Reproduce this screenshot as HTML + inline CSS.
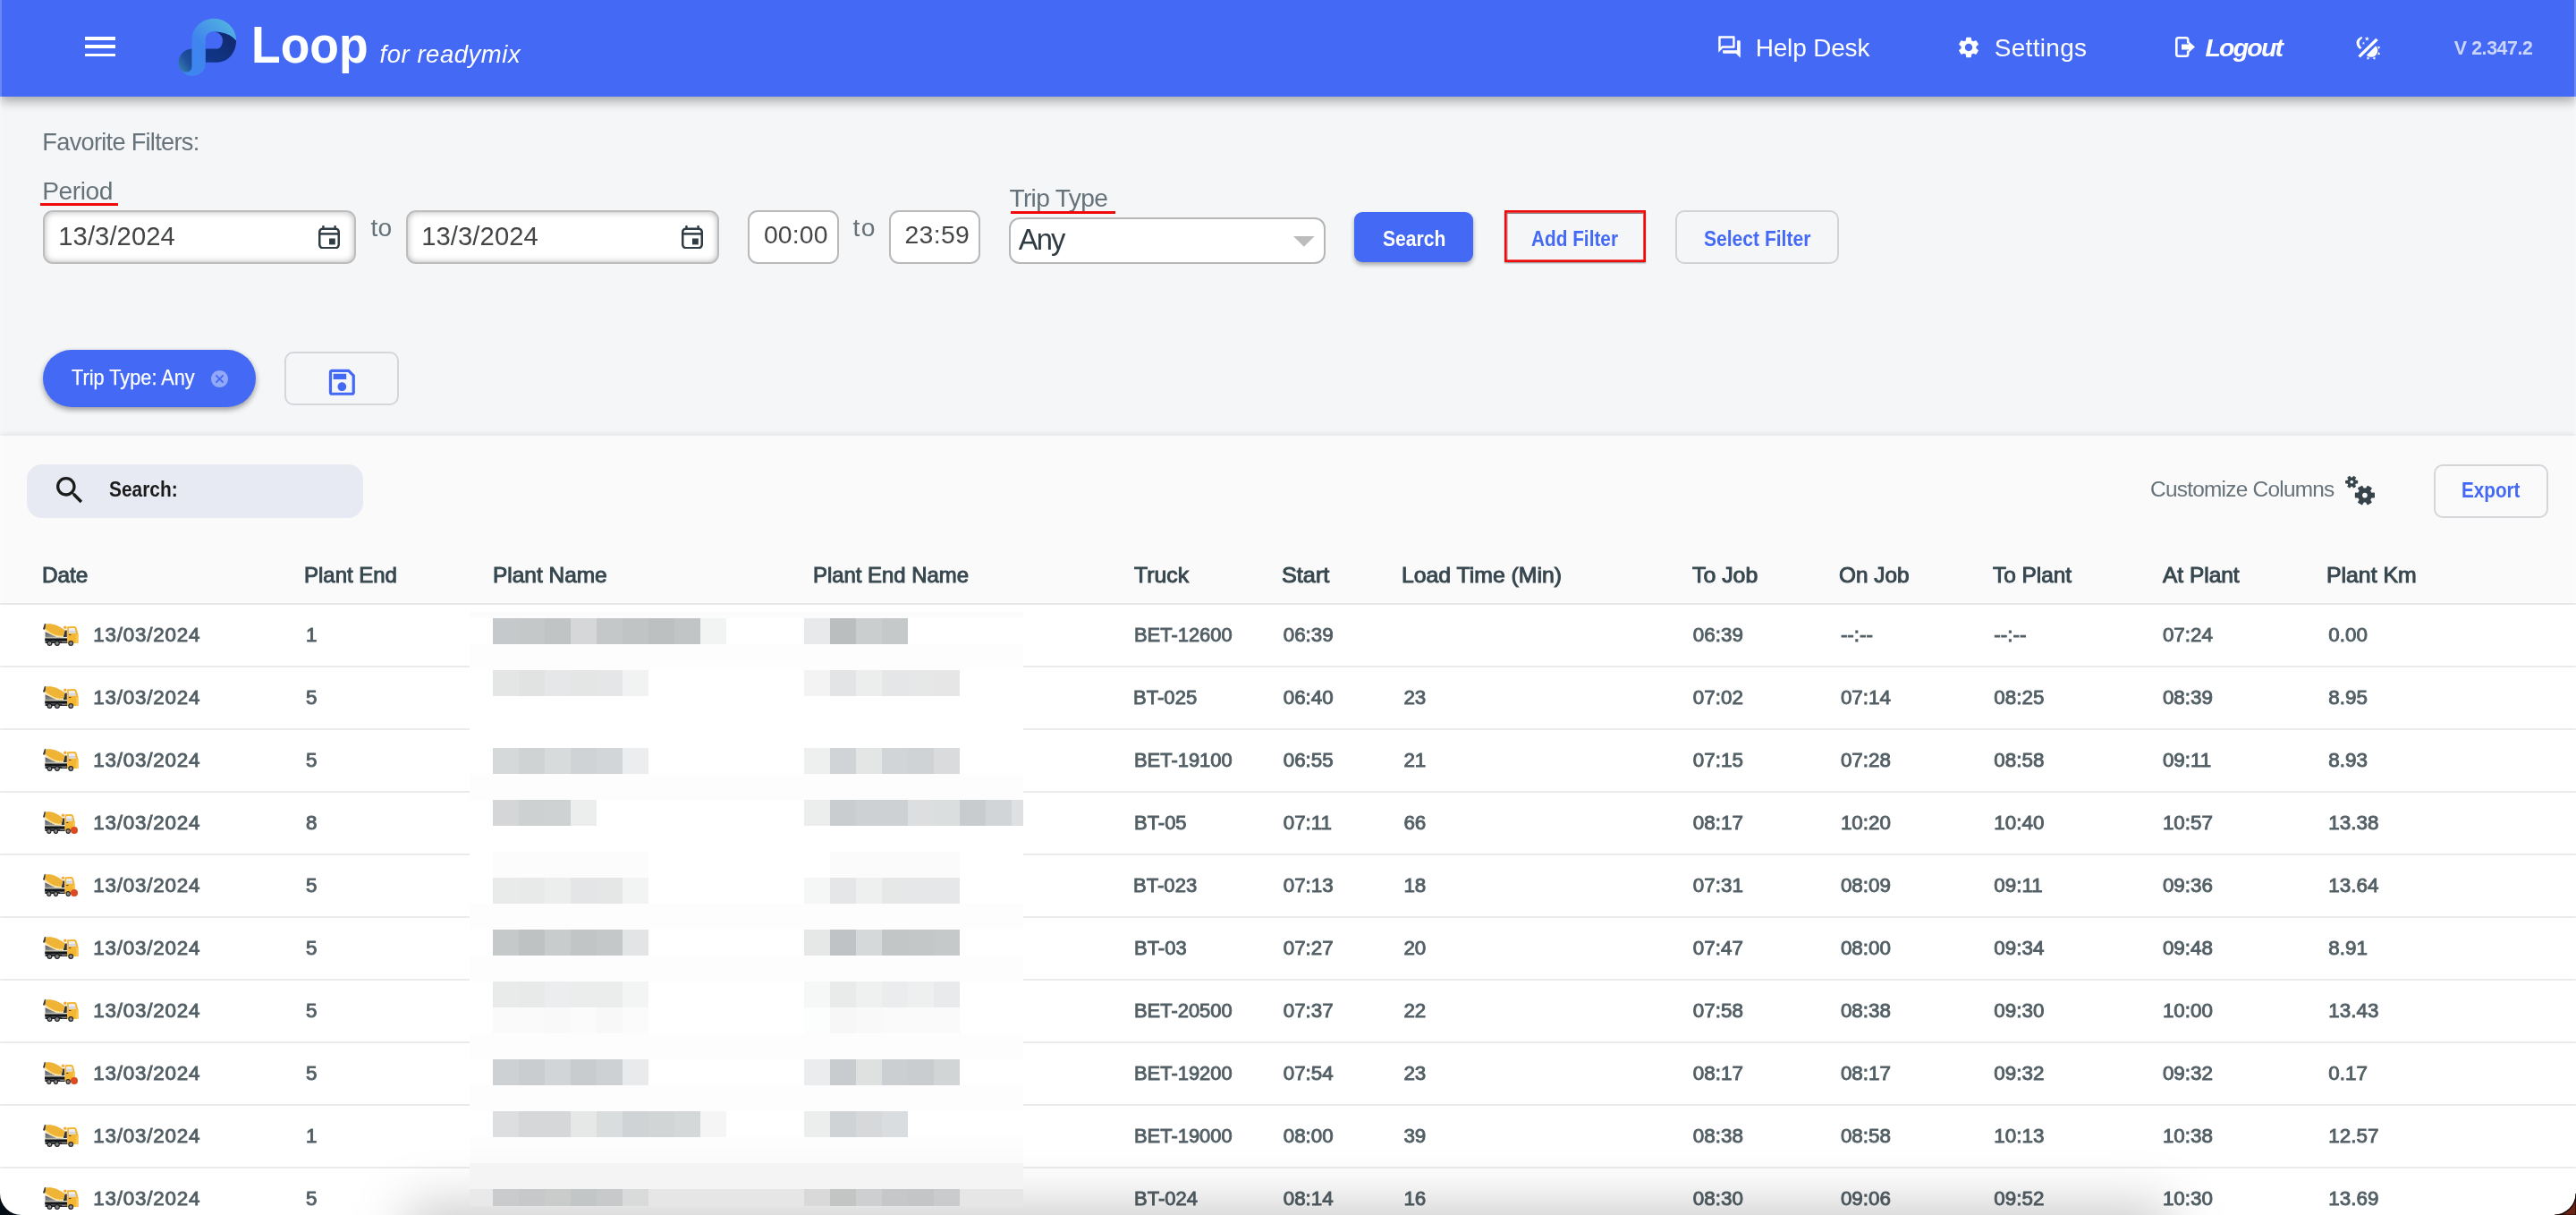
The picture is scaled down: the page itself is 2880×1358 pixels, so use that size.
<!DOCTYPE html>
<html lang="en"><head><meta charset="utf-8"><title>Loop for readymix</title>
<style>
html,body{margin:0;padding:0;}
body{width:2880px;height:1358px;position:relative;overflow:hidden;background:#fafafa;font-family:"Liberation Sans",sans-serif;}
.t{position:absolute;white-space:nowrap;line-height:1;margin:0;padding:0;}
.b{position:absolute;box-sizing:border-box;display:block;}
#root{position:absolute;left:0;top:0;width:2880px;height:1358px;overflow:hidden;will-change:transform;}
</style></head><body><div id="root">
<div class="b" style="left:0px;top:108px;width:2880px;height:379px;background:#f5f6f8;"></div>
<div class="b" style="left:0px;top:487px;width:2880px;height:189px;background:#fafafa;box-shadow:0 -1px 7px rgba(0,0,0,.095);"></div>
<div class="b" style="left:0px;top:676px;width:2880px;height:682px;background:#fff;"></div>
<div class="b" style="left:0px;top:0px;width:2880px;height:108px;background:#4469f5;box-shadow:0 5px 12px rgba(0,0,0,.33);z-index:5;"></div>
<div class="b" style="left:0;top:0;width:2880px;height:108px;z-index:6;">
<div class="b" style="left:95px;top:41px;width:34px;height:3.9px;background:#fff;"></div>
<div class="b" style="left:95px;top:50.2px;width:34px;height:3.9px;background:#fff;"></div>
<div class="b" style="left:95px;top:59.6px;width:34px;height:3.9px;background:#fff;"></div>
<svg class="b" style="left:180px;top:10px;" width="120" height="90" viewBox="0 0 120 90" ><defs>
<linearGradient id="lg1" x1="0" y1="1" x2="1" y2="0"><stop offset="0" stop-color="#3f86f0"/><stop offset=".45" stop-color="#3f84ee"/><stop offset="1" stop-color="#55bbdc"/></linearGradient>
<linearGradient id="lg2" x1="0" y1="1" x2="1" y2="0"><stop offset="0" stop-color="#10388c"/><stop offset="1" stop-color="#12276a"/></linearGradient>
<linearGradient id="lg3" x1="1" y1="0" x2="0" y2="1"><stop offset="0" stop-color="#123c8e"/><stop offset=".5" stop-color="#1f4f9c"/><stop offset="1" stop-color="#3c8fb8"/></linearGradient>
</defs>
<g transform="scale(0.074074)">
<path d="M470 600 C340 610 265 700 265 805 C265 910 340 1000 455 1010 L560 900 Z" fill="url(#lg3)"/>
<path d="M780 340 C900 335 1040 370 1135 475 C1135 660 1010 805 850 805 L670 805 L670 600 L850 600 C900 600 930 540 930 470 C930 400 870 345 780 340 Z" fill="url(#lg2)"/>
<path d="M465 870 L465 470 C465 280 620 145 800 145 C990 145 1135 300 1135 475 C1040 370 900 335 780 340 C710 345 670 400 670 470 L670 830 C670 940 580 1012 455 1012 C380 1005 330 960 300 920 C360 975 465 960 465 870 Z" fill="url(#lg1)"/>
</g></svg>
<div class="t" style="left:280.97px;top:21.81px;font-size:57.4px;color:#fff;font-weight:700;transform:scaleX(0.9318);transform-origin:0 0;">Loop</div>
<div class="t" style="left:424.59px;top:47.02px;font-size:27.5px;color:#fff;font-style:italic;letter-spacing:0.525px;">for readymix</div>
<svg class="b" style="left:1920px;top:39px;" width="27" height="27" viewBox="1 1 22 22" ><path fill="#fff" d="M15 4v7H5.17L4 12.17V4h11m1-2H3c-.55 0-1 .45-1 1v14l4-4h10c.55 0 1-.45 1-1V3c0-.55-.45-1-1-1zm5 4h-2v9H6v2c0 .55.45 1 1 1h11l4 4V7c0-.55-.45-1-1-1z"/></svg>
<div class="t" style="left:1962.70px;top:39.70px;font-size:28px;color:#fff;letter-spacing:-0.178px;">Help Desk</div>
<svg class="b" style="left:2186.5px;top:38.5px;" width="28" height="28" viewBox="0 0 24 24" ><path fill="#fff" d="M19.14 12.94c.04-.3.06-.61.06-.94 0-.32-.02-.64-.07-.94l2.03-1.58c.18-.14.23-.41.12-.61l-1.92-3.32c-.12-.22-.37-.29-.59-.22l-2.39.96c-.5-.38-1.03-.7-1.62-.94l-.36-2.54c-.04-.24-.24-.41-.48-.41h-3.84c-.24 0-.43.17-.47.41l-.36 2.54c-.59.24-1.13.57-1.62.94l-2.39-.96c-.22-.08-.47 0-.59.22L2.74 8.87c-.12.21-.08.47.12.61l2.03 1.58c-.05.3-.09.63-.09.94s.02.64.07.94l-2.03 1.58c-.18.14-.23.41-.12.61l1.92 3.32c.12.22.37.29.59.22l2.39-.96c.5.38 1.03.7 1.62.94l.36 2.54c.05.24.24.41.48.41h3.84c.24 0 .44-.17.47-.41l.36-2.54c.59-.24 1.13-.56 1.62-.94l2.39.96c.22.08.47 0 .59-.22l1.92-3.32c.12-.22.07-.47-.12-.61l-2.01-1.58zM12 15.6c-1.98 0-3.6-1.62-3.6-3.6s1.62-3.6 3.6-3.6 3.6 1.62 3.6 3.6-1.62 3.6-3.6 3.6z"/></svg>
<div class="t" style="left:2229.74px;top:39.70px;font-size:28px;color:#fff;letter-spacing:0.301px;">Settings</div>
<svg class="b" style="left:2431.5px;top:41px;" width="23" height="23" viewBox="0 0 23 23" ><path fill="none" stroke="#fff" stroke-width="2.6" stroke-linejoin="round" stroke-linecap="butt" d="M14.2 7.5 V3.5 Q14.2 1.3 12 1.3 H3.5 Q1.3 1.3 1.3 3.5 V19.5 Q1.3 21.7 3.5 21.7 H12 Q14.2 21.7 14.2 19.5 V15.5"/><path fill="#fff" d="M7 8.6 H15 V5.2 L22 11.5 L15 17.8 V14.4 H7 Z"/></svg>
<div class="t" style="left:2465.52px;top:39.07px;font-size:28.5px;color:#fff;font-weight:700;font-style:italic;letter-spacing:-1.809px;">Logout</div>
<svg class="b" style="left:2634px;top:40px;" width="27" height="27" viewBox="0 0 27 27" ><g fill="#fff"><path d="M22.2 2.7 L24.8 5.0 L4.7 24.5 L2.4 22.2 Z"/>
<path d="M6.6 0.9 C2.6 2.0 0.5 5 0.55 7.8 C0.6 10.8 2.3 13.6 4.7 15.0 L6.5 13.3 C4.7 12 3.6 10 3.7 7.8 C3.8 5.6 4.9 3.9 7.3 2.7 Z"/>
<path d="M12.30 0.70 L12.97 2.48 L14.87 2.57 L13.38 3.75 L13.89 5.58 L12.30 4.53 L10.71 5.58 L11.22 3.75 L9.73 2.57 L11.63 2.48Z"/><path d="M8.40 6.60 L8.82 7.72 L10.02 7.77 L9.08 8.52 L9.40 9.68 L8.40 9.01 L7.40 9.68 L7.72 8.52 L6.78 7.77 L7.98 7.72Z"/>
<path d="M22.2 11.2 A7.4 7.4 0 0 1 11.7 21.7 Z"/>
<path d="M27.33 12.25 L25.38 14.88 L24.10 11.73Z M27.33 20.65 L24.10 21.17 L25.38 18.02Z M21.15 26.83 L18.52 24.88 L21.67 23.60Z M12.75 26.83 L12.23 23.60 L15.38 24.88Z"/></g></svg>
<div class="t" style="left:2743.87px;top:43.77px;font-size:21.3px;color:#fff;font-weight:700;letter-spacing:-0.403px;opacity:0.72;">V 2.347.2</div>
</div>
<div class="t" style="left:47.37px;top:144.98px;font-size:27.2px;color:#66737a;letter-spacing:-0.719px;">Favorite Filters:</div>
<div class="t" style="left:47.29px;top:198.73px;font-size:28.2px;color:#66737a;letter-spacing:-0.482px;">Period</div>
<div class="b" style="left:45.2px;top:226.6px;width:86.7px;height:3px;background:#f00a0c;"></div>
<div class="b" style="left:48.3px;top:235.2px;width:349.5px;height:59.5px;background:#fff;border:2px solid #bcbcbc;border-radius:11px;box-shadow:inset 0 0 7px rgba(0,0,0,.30);"></div>
<div class="t" style="left:65.28px;top:249.58px;font-size:29.2px;color:#434547;letter-spacing:0.082px;">13/3/2024</div>
<svg class="b" style="left:356px;top:251.6px;" width="24" height="26.4" viewBox="0 0 24 26.4" ><g fill="none" stroke="#2f3c43" stroke-width="2.5"><rect x="1.25" y="3.65" width="21.5" height="21.5" rx="3.6"/><path d="M1.25 9.4H22.75"/></g><g fill="#2f3c43"><rect x="4.2" y="0" width="2.5" height="3.2" rx="1"/><rect x="17.4" y="0" width="2.5" height="3.2" rx="1"/><rect x="12" y="14.5" width="6.8" height="6.9"/></g></svg>
<div class="t" style="left:414.38px;top:239.93px;font-size:28.2px;color:#66737a;letter-spacing:0.360px;">to</div>
<div class="b" style="left:454.3px;top:235.2px;width:349.7px;height:59.5px;background:#fff;border:2px solid #bcbcbc;border-radius:11px;box-shadow:inset 0 0 7px rgba(0,0,0,.30);"></div>
<div class="t" style="left:471.18px;top:249.58px;font-size:29.2px;color:#434547;letter-spacing:0.094px;">13/3/2024</div>
<svg class="b" style="left:762px;top:251.8px;" width="24" height="26.4" viewBox="0 0 24 26.4" ><g fill="none" stroke="#2f3c43" stroke-width="2.5"><rect x="1.25" y="3.65" width="21.5" height="21.5" rx="3.6"/><path d="M1.25 9.4H22.75"/></g><g fill="#2f3c43"><rect x="4.2" y="0" width="2.5" height="3.2" rx="1"/><rect x="17.4" y="0" width="2.5" height="3.2" rx="1"/><rect x="12" y="14.5" width="6.8" height="6.9"/></g></svg>
<div class="b" style="left:836px;top:235px;width:101.5px;height:59.6px;background:#fff;border:2px solid #b9b9b9;border-radius:11px;"></div>
<div class="t" style="left:853.89px;top:247.96px;font-size:28.4px;color:#434547;letter-spacing:0.133px;">00:00</div>
<div class="t" style="left:953.58px;top:240.03px;font-size:28.2px;color:#66737a;letter-spacing:1.360px;">to</div>
<div class="b" style="left:994.4px;top:235px;width:101.4px;height:59.6px;background:#fff;border:2px solid #b9b9b9;border-radius:11px;"></div>
<div class="t" style="left:1011.48px;top:247.96px;font-size:28.4px;color:#434547;letter-spacing:0.325px;">23:59</div>
<div class="t" style="left:1128.38px;top:207.13px;font-size:28.2px;color:#66737a;letter-spacing:-0.666px;">Trip Type</div>
<div class="b" style="left:1129.8px;top:236.2px;width:117px;height:2.8px;background:#f00a0c;"></div>
<div class="b" style="left:1128.2px;top:243.2px;width:353.4px;height:51.4px;background:#fff;border:2px solid #b6b6b6;border-radius:12px;"></div>
<div class="t" style="left:1138.73px;top:252.22px;font-size:32.7px;color:#2f3c43;letter-spacing:-1.856px;">Any</div>
<svg class="b" style="left:1446px;top:264px;" width="23.7" height="11.8" viewBox="0 0 23.7 11.8" ><path fill="#bcbcbc" d="M0 0H23.7L11.85 11.8Z"/></svg>
<div class="b" style="left:1514px;top:237.2px;width:132.8px;height:55.8px;background:#4469f5;border-radius:9px;box-shadow:0 3px 5px rgba(0,0,0,.32);"></div>
<div class="t" style="left:1545.71px;top:254.73px;font-size:24.3px;color:#fff;font-weight:700;transform:scaleX(0.8684);transform-origin:0 0;">Search</div>
<div class="b" style="left:1682px;top:235.2px;width:158px;height:58px;box-shadow:0 1.5px 1.5px rgba(0,0,0,.35), inset 0 4px 1.5px -1.5px rgba(0,0,0,.3);"></div>
<svg class="b" style="left:1682px;top:235.2px;" width="158" height="58" viewBox="0 0 158 58" ><rect x="1.35" y="1.35" width="155.3" height="55.3" fill="none" stroke="#ee0a0a" stroke-width="2.7"/></svg>
<div class="b" style="left:1684.7px;top:237.9px;width:152.6px;height:1.3px;background:rgba(0,0,0,.45);"></div>
<div class="b" style="left:1684.7px;top:239.2px;width:1px;height:51px;background:rgba(0,0,0,.22);"></div>
<div class="t" style="left:1711.50px;top:254.73px;font-size:24.3px;color:#4469f5;font-weight:700;transform:scaleX(0.8554);transform-origin:0 0;">Add Filter</div>
<div class="b" style="left:1873.4px;top:235.4px;width:182.3px;height:59.2px;border:2px solid #d2d3d6;border-radius:10px;"></div>
<div class="t" style="left:1904.61px;top:254.73px;font-size:24.3px;color:#4469f5;font-weight:700;transform:scaleX(0.8666);transform-origin:0 0;">Select Filter</div>
<div class="b" style="left:48px;top:391.2px;width:238.2px;height:63.6px;background:#4469f5;border-radius:32px;box-shadow:0 3px 6px rgba(0,0,0,.38);"></div>
<div class="t" style="left:80.12px;top:410.05px;font-size:23.8px;color:#fff;transform:scaleX(0.9133);transform-origin:0 0;-webkit-text-stroke:0.25px #fff;">Trip Type: Any</div>
<svg class="b" style="left:235.6px;top:414.2px;" width="19" height="19" viewBox="2 2 20 20" ><path fill="#fff" fill-opacity=".42" d="M12 2C6.47 2 2 6.47 2 12s4.47 10 10 10 10-4.47 10-10S17.53 2 12 2zm5 13.59L15.59 17 12 13.41 8.41 17 7 15.59 10.59 12 7 8.41 8.41 7 12 10.59 15.59 7 17 8.41 13.41 12 17 15.59z"/></svg>
<div class="b" style="left:318.3px;top:393.4px;width:127.3px;height:59.2px;border:2px solid #d4d6da;border-radius:10px;"></div>
<svg class="b" style="left:362.7px;top:408.2px;" width="38.7" height="38.7" viewBox="0 0 24 24" ><path fill="#4469f5" d="M17 3H5c-1.11 0-2 .9-2 2v14c0 1.1.89 2 2 2h14c1.1 0 2-.9 2-2V7l-4-4zm2 16H5V5h11.17L19 7.83V19zm-7-7c-1.66 0-3 1.34-3 3s1.34 3 3 3 3-1.34 3-3-1.34-3-3-3zM6 6h9v4H6z"/></svg>
<div class="b" style="left:30px;top:518.9px;width:376px;height:60.1px;background:#e7eaf3;border-radius:17px;"></div>
<svg class="b" style="left:57.9px;top:528.1px;" width="40" height="40" viewBox="0 0 24 24" ><path fill="#1b1b1b" d="M15.5 14h-.79l-.28-.27C15.41 12.59 16 11.11 16 9.5 16 5.91 13.09 3 9.5 3S3 5.91 3 9.5 5.91 16 9.5 16c1.61 0 3.09-.59 4.23-1.57l.27.28v.79l5 4.99L20.49 19l-4.99-5zm-6 0C7.01 14 5 11.99 5 9.5S7.01 5 9.5 5 14 7.01 14 9.5 11.99 14 9.5 14z"/></svg>
<div class="t" style="left:122.02px;top:536.13px;font-size:23px;color:#1b1b1b;font-weight:700;transform:scaleX(0.9078);transform-origin:0 0;">Search:</div>
<div class="t" style="left:2404.08px;top:534.65px;font-size:24.4px;color:#66737a;letter-spacing:-0.751px;">Customize Columns</div>
<div class="b" style="left:2721.3px;top:519px;width:128px;height:59.5px;border:2px solid #d4d6da;border-radius:10px;"></div>
<div class="t" style="left:2752.33px;top:537.23px;font-size:23px;color:#4469f5;font-weight:700;transform:scaleX(0.8994);transform-origin:0 0;">Export</div>
<svg class="b" style="left:2620px;top:529px;" width="38" height="38" viewBox="0 0 38 38" ><path fill="#36434a" fill-rule="evenodd" stroke="#36434a" stroke-width="1" stroke-linejoin="round" d="M13.70 8.34 L15.75 8.31 L15.75 11.09 L13.70 11.06 L12.63 12.92 L13.68 14.68 L11.27 16.07 L10.27 14.28 L8.13 14.28 L7.13 16.07 L4.72 14.68 L5.77 12.92 L4.70 11.06 L2.65 11.09 L2.65 8.31 L4.70 8.34 L5.77 6.48 L4.72 4.72 L7.13 3.33 L8.13 5.12 L10.27 5.12 L11.27 3.33 L13.68 4.72 L12.63 6.48Z M11.50 9.70 A2.3 2.3 0 1 0 6.90 9.70 A2.3 2.3 0 1 0 11.50 9.70Z"/><path fill="#36434a" fill-rule="evenodd" stroke="#36434a" stroke-width="1.6" stroke-linejoin="round" d="M30.98 22.46 L34.17 22.42 L34.17 26.78 L30.98 26.74 L29.29 29.67 L30.93 32.40 L27.14 34.59 L25.59 31.80 L22.21 31.80 L20.66 34.59 L16.87 32.40 L18.51 29.67 L16.82 26.74 L13.63 26.78 L13.63 22.42 L16.82 22.46 L18.51 19.53 L16.87 16.80 L20.66 14.61 L22.21 17.40 L25.59 17.40 L27.14 14.61 L30.93 16.80 L29.29 19.53Z M27.60 24.60 A3.7 3.7 0 1 0 20.20 24.60 A3.7 3.7 0 1 0 27.60 24.60Z"/></svg>
<div class="t" style="left:47.01px;top:630.98px;font-size:24px;color:#37474f;transform:scaleX(1.0133);transform-origin:0 0;-webkit-text-stroke:0.95px #37474f;">Date</div>
<div class="t" style="left:340.04px;top:630.98px;font-size:24px;color:#37474f;transform:scaleX(0.9984);transform-origin:0 0;-webkit-text-stroke:0.95px #37474f;">Plant End</div>
<div class="t" style="left:550.70px;top:630.98px;font-size:24px;color:#37474f;transform:scaleX(1.0184);transform-origin:0 0;-webkit-text-stroke:0.95px #37474f;">Plant Name</div>
<div class="t" style="left:908.64px;top:630.98px;font-size:24px;color:#37474f;transform:scaleX(0.9957);transform-origin:0 0;-webkit-text-stroke:0.95px #37474f;">Plant End Name</div>
<div class="t" style="left:1267.95px;top:630.98px;font-size:24px;color:#37474f;transform:scaleX(1.0336);transform-origin:0 0;-webkit-text-stroke:0.95px #37474f;">Truck</div>
<div class="t" style="left:1432.86px;top:630.98px;font-size:24px;color:#37474f;transform:scaleX(1.0518);transform-origin:0 0;-webkit-text-stroke:0.95px #37474f;">Start</div>
<div class="t" style="left:1566.97px;top:630.98px;font-size:24px;color:#37474f;transform:scaleX(1.0321);transform-origin:0 0;-webkit-text-stroke:0.95px #37474f;">Load Time (Min)</div>
<div class="t" style="left:1892.05px;top:630.98px;font-size:24px;color:#37474f;transform:scaleX(1.0362);transform-origin:0 0;-webkit-text-stroke:0.95px #37474f;">To Job</div>
<div class="t" style="left:2056.46px;top:630.98px;font-size:24px;color:#37474f;transform:scaleX(1.0138);transform-origin:0 0;-webkit-text-stroke:0.95px #37474f;">On Job</div>
<div class="t" style="left:2228.46px;top:630.98px;font-size:24px;color:#37474f;transform:scaleX(1.0161);transform-origin:0 0;-webkit-text-stroke:0.95px #37474f;">To Plant</div>
<div class="t" style="left:2417.55px;top:630.98px;font-size:24px;color:#37474f;transform:scaleX(1.0187);transform-origin:0 0;-webkit-text-stroke:0.95px #37474f;">At Plant</div>
<div class="t" style="left:2600.97px;top:630.98px;font-size:24px;color:#37474f;transform:scaleX(1.0337);transform-origin:0 0;-webkit-text-stroke:0.95px #37474f;">Plant Km</div>
<div class="b" style="left:0px;top:674px;width:2880px;height:2px;background:#e8e8e8;"></div>
<svg class="b" style="left:48.3px;top:697px;overflow:visible;" width="40" height="25" viewBox="0 0 40 25" ><defs><linearGradient id="tg1" x1="0" y1="0" x2="1" y2="1"><stop offset="0" stop-color="#55585e"/><stop offset="1" stop-color="#b3b5b9"/></linearGradient>
<linearGradient id="tg2" x1="0" y1="0" x2="0" y2="1"><stop offset="0" stop-color="#f2f3fa"/><stop offset=".55" stop-color="#e9ebf5"/><stop offset=".6" stop-color="#cfd4e4"/><stop offset="1" stop-color="#dfe2ee"/></linearGradient></defs>
<g>
<path d="M2.57 9.3 L14.75 14.7 L26.3 15.7 L2.57 15.7 Z" fill="url(#tg1)"/>
<path d="M2.2 15.6 H26.8 V16.5 H2.2 Z" fill="#d8d0a2"/>
<path d="M2.2 16.4 H27.3 V19.4 H2.2 Z" fill="#12151a"/>
<path d="M2.6 19.3 H28 V22 H2.6 Z" fill="#2b2d31"/>
<path d="M21.2 20 H26.6 V21 H21.2 Z" fill="#80838a"/>
<path d="M24.4 7.6 L26.8 7.6 L26.8 14.9 L22.8 14.9 Z" fill="#33363e"/>
<path d="M-0.07 6.17 L1.9 0.08 L4.05 0.74 L2.24 6.83 Z" fill="#35373b"/>
<path d="M2.9 0.9 C5.5 0.2 8 0.3 10.1 0.57 C13 1.1 15.6 2 18 3.2 C20.2 4.3 22.2 5.4 23.6 6.4 C24.4 7 24.7 7.5 24.6 8.1 L22.5 14.4 C19.6 14.7 17 14.6 14.75 14.1 C12.3 13.5 10.1 12.6 8.2 11.4 C6 10.2 4 8.8 2.57 7.5 Z" fill="#efb336"/>
<path d="M2.95 6.1 C4.8 7.8 6.8 9.2 8.9 10.3 C11 11.5 13.2 12.5 15.5 13.1 C17.7 13.6 20 13.8 22.8 13.6 L22.5 14.6 C19.6 14.8 17.3 14.7 15.1 14.2 C12.7 13.6 10.5 12.7 8.4 11.5 C6.3 10.3 4.3 8.9 2.6 7.3 Z" fill="#fbe59a"/>
<circle cx="24.8" cy="4.2" r="1.7" fill="#f5a838"/>
<path d="M27.6 3.2 L35.5 2.9 Q37.3 3.1 37.9 5.5 L39.5 11.4 V22 H27.1 V4 Q27.1 3.3 27.6 3.2 Z" fill="#f5b733"/>
<path d="M37.2 12 L39.5 11.4 V22 H36.6 Z" fill="#f8c54e"/>
<path d="M28.9 5.2 L34.8 5.0 Q35.5 5.0 35.7 5.7 L37 10.8 H28.9 Z" fill="url(#tg2)"/>
<rect x="28.9" y="11.9" width="2.6" height="1.2" rx=".5" fill="#4a4030"/>
<circle cx="7.5" cy="22" r="2.95" fill="#1f2023"/><circle cx="7.5" cy="22" r="1.75" fill="#a3a3a3"/><circle cx="7.5" cy="22" r=".7" fill="#5a5a5a"/>
<circle cx="15.9" cy="22" r="2.95" fill="#1f2023"/><circle cx="15.9" cy="22" r="1.75" fill="#a3a3a3"/><circle cx="15.9" cy="22" r=".7" fill="#5a5a5a"/>
<circle cx="31.2" cy="22" r="2.95" fill="#1f2023"/><circle cx="31.2" cy="22" r="1.75" fill="#a3a3a3"/><circle cx="31.2" cy="22" r=".7" fill="#5a5a5a"/>
</g></svg>
<div class="t" style="left:104.30px;top:698.64px;font-size:22.4px;color:#525f65;letter-spacing:0.793px;-webkit-text-stroke:0.9px #525f65;">13/03/2024</div>
<div class="t" style="left:342.00px;top:698.64px;font-size:22.4px;color:#525f65;-webkit-text-stroke:0.9px #525f65;">1</div>
<div class="t" style="left:1267.50px;top:698.64px;font-size:22.4px;color:#525f65;transform:scaleX(0.9792);transform-origin:0 0;-webkit-text-stroke:0.9px #525f65;">BET-12600</div>
<div class="t" style="left:1434.70px;top:698.64px;font-size:22.4px;color:#525f65;-webkit-text-stroke:0.9px #525f65;">06:39</div>
<div class="t" style="left:1892.80px;top:698.64px;font-size:22.4px;color:#525f65;-webkit-text-stroke:0.9px #525f65;">06:39</div>
<div class="t" style="left:2057.90px;top:698.64px;font-size:22.4px;color:#525f65;-webkit-text-stroke:0.9px #525f65;">--:--</div>
<div class="t" style="left:2229.30px;top:698.64px;font-size:22.4px;color:#525f65;-webkit-text-stroke:0.9px #525f65;">--:--</div>
<div class="t" style="left:2417.90px;top:698.64px;font-size:22.4px;color:#525f65;-webkit-text-stroke:0.9px #525f65;">07:24</div>
<div class="t" style="left:2603.30px;top:698.64px;font-size:22.4px;color:#525f65;-webkit-text-stroke:0.9px #525f65;">0.00</div>
<div class="b" style="left:0px;top:744px;width:2880px;height:2px;background:#ebebeb;"></div>
<svg class="b" style="left:48.3px;top:767px;overflow:visible;" width="40" height="25" viewBox="0 0 40 25" ><defs><linearGradient id="tg1" x1="0" y1="0" x2="1" y2="1"><stop offset="0" stop-color="#55585e"/><stop offset="1" stop-color="#b3b5b9"/></linearGradient>
<linearGradient id="tg2" x1="0" y1="0" x2="0" y2="1"><stop offset="0" stop-color="#f2f3fa"/><stop offset=".55" stop-color="#e9ebf5"/><stop offset=".6" stop-color="#cfd4e4"/><stop offset="1" stop-color="#dfe2ee"/></linearGradient></defs>
<g>
<path d="M2.57 9.3 L14.75 14.7 L26.3 15.7 L2.57 15.7 Z" fill="url(#tg1)"/>
<path d="M2.2 15.6 H26.8 V16.5 H2.2 Z" fill="#d8d0a2"/>
<path d="M2.2 16.4 H27.3 V19.4 H2.2 Z" fill="#12151a"/>
<path d="M2.6 19.3 H28 V22 H2.6 Z" fill="#2b2d31"/>
<path d="M21.2 20 H26.6 V21 H21.2 Z" fill="#80838a"/>
<path d="M24.4 7.6 L26.8 7.6 L26.8 14.9 L22.8 14.9 Z" fill="#33363e"/>
<path d="M-0.07 6.17 L1.9 0.08 L4.05 0.74 L2.24 6.83 Z" fill="#35373b"/>
<path d="M2.9 0.9 C5.5 0.2 8 0.3 10.1 0.57 C13 1.1 15.6 2 18 3.2 C20.2 4.3 22.2 5.4 23.6 6.4 C24.4 7 24.7 7.5 24.6 8.1 L22.5 14.4 C19.6 14.7 17 14.6 14.75 14.1 C12.3 13.5 10.1 12.6 8.2 11.4 C6 10.2 4 8.8 2.57 7.5 Z" fill="#efb336"/>
<path d="M2.95 6.1 C4.8 7.8 6.8 9.2 8.9 10.3 C11 11.5 13.2 12.5 15.5 13.1 C17.7 13.6 20 13.8 22.8 13.6 L22.5 14.6 C19.6 14.8 17.3 14.7 15.1 14.2 C12.7 13.6 10.5 12.7 8.4 11.5 C6.3 10.3 4.3 8.9 2.6 7.3 Z" fill="#fbe59a"/>
<circle cx="24.8" cy="4.2" r="1.7" fill="#f5a838"/>
<path d="M27.6 3.2 L35.5 2.9 Q37.3 3.1 37.9 5.5 L39.5 11.4 V22 H27.1 V4 Q27.1 3.3 27.6 3.2 Z" fill="#f5b733"/>
<path d="M37.2 12 L39.5 11.4 V22 H36.6 Z" fill="#f8c54e"/>
<path d="M28.9 5.2 L34.8 5.0 Q35.5 5.0 35.7 5.7 L37 10.8 H28.9 Z" fill="url(#tg2)"/>
<rect x="28.9" y="11.9" width="2.6" height="1.2" rx=".5" fill="#4a4030"/>
<circle cx="7.5" cy="22" r="2.95" fill="#1f2023"/><circle cx="7.5" cy="22" r="1.75" fill="#a3a3a3"/><circle cx="7.5" cy="22" r=".7" fill="#5a5a5a"/>
<circle cx="15.9" cy="22" r="2.95" fill="#1f2023"/><circle cx="15.9" cy="22" r="1.75" fill="#a3a3a3"/><circle cx="15.9" cy="22" r=".7" fill="#5a5a5a"/>
<circle cx="31.2" cy="22" r="2.95" fill="#1f2023"/><circle cx="31.2" cy="22" r="1.75" fill="#a3a3a3"/><circle cx="31.2" cy="22" r=".7" fill="#5a5a5a"/>
</g></svg>
<div class="t" style="left:104.30px;top:768.64px;font-size:22.4px;color:#525f65;letter-spacing:0.793px;-webkit-text-stroke:0.9px #525f65;">13/03/2024</div>
<div class="t" style="left:342.00px;top:768.64px;font-size:22.4px;color:#525f65;-webkit-text-stroke:0.9px #525f65;">5</div>
<div class="t" style="left:1267.49px;top:768.64px;font-size:22.4px;color:#525f65;transform:scaleX(0.9861);transform-origin:0 0;-webkit-text-stroke:0.9px #525f65;">BT-025</div>
<div class="t" style="left:1434.70px;top:768.64px;font-size:22.4px;color:#525f65;-webkit-text-stroke:0.9px #525f65;">06:40</div>
<div class="t" style="left:1569.40px;top:768.64px;font-size:22.4px;color:#525f65;-webkit-text-stroke:0.9px #525f65;">23</div>
<div class="t" style="left:1892.80px;top:768.64px;font-size:22.4px;color:#525f65;-webkit-text-stroke:0.9px #525f65;">07:02</div>
<div class="t" style="left:2057.90px;top:768.64px;font-size:22.4px;color:#525f65;-webkit-text-stroke:0.9px #525f65;">07:14</div>
<div class="t" style="left:2229.30px;top:768.64px;font-size:22.4px;color:#525f65;-webkit-text-stroke:0.9px #525f65;">08:25</div>
<div class="t" style="left:2417.90px;top:768.64px;font-size:22.4px;color:#525f65;-webkit-text-stroke:0.9px #525f65;">08:39</div>
<div class="t" style="left:2603.30px;top:768.64px;font-size:22.4px;color:#525f65;-webkit-text-stroke:0.9px #525f65;">8.95</div>
<div class="b" style="left:0px;top:814px;width:2880px;height:2px;background:#ebebeb;"></div>
<svg class="b" style="left:48.3px;top:837px;overflow:visible;" width="40" height="25" viewBox="0 0 40 25" ><defs><linearGradient id="tg1" x1="0" y1="0" x2="1" y2="1"><stop offset="0" stop-color="#55585e"/><stop offset="1" stop-color="#b3b5b9"/></linearGradient>
<linearGradient id="tg2" x1="0" y1="0" x2="0" y2="1"><stop offset="0" stop-color="#f2f3fa"/><stop offset=".55" stop-color="#e9ebf5"/><stop offset=".6" stop-color="#cfd4e4"/><stop offset="1" stop-color="#dfe2ee"/></linearGradient></defs>
<g>
<path d="M2.57 9.3 L14.75 14.7 L26.3 15.7 L2.57 15.7 Z" fill="url(#tg1)"/>
<path d="M2.2 15.6 H26.8 V16.5 H2.2 Z" fill="#d8d0a2"/>
<path d="M2.2 16.4 H27.3 V19.4 H2.2 Z" fill="#12151a"/>
<path d="M2.6 19.3 H28 V22 H2.6 Z" fill="#2b2d31"/>
<path d="M21.2 20 H26.6 V21 H21.2 Z" fill="#80838a"/>
<path d="M24.4 7.6 L26.8 7.6 L26.8 14.9 L22.8 14.9 Z" fill="#33363e"/>
<path d="M-0.07 6.17 L1.9 0.08 L4.05 0.74 L2.24 6.83 Z" fill="#35373b"/>
<path d="M2.9 0.9 C5.5 0.2 8 0.3 10.1 0.57 C13 1.1 15.6 2 18 3.2 C20.2 4.3 22.2 5.4 23.6 6.4 C24.4 7 24.7 7.5 24.6 8.1 L22.5 14.4 C19.6 14.7 17 14.6 14.75 14.1 C12.3 13.5 10.1 12.6 8.2 11.4 C6 10.2 4 8.8 2.57 7.5 Z" fill="#efb336"/>
<path d="M2.95 6.1 C4.8 7.8 6.8 9.2 8.9 10.3 C11 11.5 13.2 12.5 15.5 13.1 C17.7 13.6 20 13.8 22.8 13.6 L22.5 14.6 C19.6 14.8 17.3 14.7 15.1 14.2 C12.7 13.6 10.5 12.7 8.4 11.5 C6.3 10.3 4.3 8.9 2.6 7.3 Z" fill="#fbe59a"/>
<circle cx="24.8" cy="4.2" r="1.7" fill="#f5a838"/>
<path d="M27.6 3.2 L35.5 2.9 Q37.3 3.1 37.9 5.5 L39.5 11.4 V22 H27.1 V4 Q27.1 3.3 27.6 3.2 Z" fill="#f5b733"/>
<path d="M37.2 12 L39.5 11.4 V22 H36.6 Z" fill="#f8c54e"/>
<path d="M28.9 5.2 L34.8 5.0 Q35.5 5.0 35.7 5.7 L37 10.8 H28.9 Z" fill="url(#tg2)"/>
<rect x="28.9" y="11.9" width="2.6" height="1.2" rx=".5" fill="#4a4030"/>
<circle cx="7.5" cy="22" r="2.95" fill="#1f2023"/><circle cx="7.5" cy="22" r="1.75" fill="#a3a3a3"/><circle cx="7.5" cy="22" r=".7" fill="#5a5a5a"/>
<circle cx="15.9" cy="22" r="2.95" fill="#1f2023"/><circle cx="15.9" cy="22" r="1.75" fill="#a3a3a3"/><circle cx="15.9" cy="22" r=".7" fill="#5a5a5a"/>
<circle cx="31.2" cy="22" r="2.95" fill="#1f2023"/><circle cx="31.2" cy="22" r="1.75" fill="#a3a3a3"/><circle cx="31.2" cy="22" r=".7" fill="#5a5a5a"/>
</g></svg>
<div class="t" style="left:104.30px;top:838.64px;font-size:22.4px;color:#525f65;letter-spacing:0.793px;-webkit-text-stroke:0.9px #525f65;">13/03/2024</div>
<div class="t" style="left:342.00px;top:838.64px;font-size:22.4px;color:#525f65;-webkit-text-stroke:0.9px #525f65;">5</div>
<div class="t" style="left:1267.50px;top:838.64px;font-size:22.4px;color:#525f65;transform:scaleX(0.9792);transform-origin:0 0;-webkit-text-stroke:0.9px #525f65;">BET-19100</div>
<div class="t" style="left:1434.70px;top:838.64px;font-size:22.4px;color:#525f65;-webkit-text-stroke:0.9px #525f65;">06:55</div>
<div class="t" style="left:1569.40px;top:838.64px;font-size:22.4px;color:#525f65;-webkit-text-stroke:0.9px #525f65;">21</div>
<div class="t" style="left:1892.80px;top:838.64px;font-size:22.4px;color:#525f65;-webkit-text-stroke:0.9px #525f65;">07:15</div>
<div class="t" style="left:2057.90px;top:838.64px;font-size:22.4px;color:#525f65;-webkit-text-stroke:0.9px #525f65;">07:28</div>
<div class="t" style="left:2229.30px;top:838.64px;font-size:22.4px;color:#525f65;-webkit-text-stroke:0.9px #525f65;">08:58</div>
<div class="t" style="left:2417.90px;top:838.64px;font-size:22.4px;color:#525f65;-webkit-text-stroke:0.9px #525f65;">09:11</div>
<div class="t" style="left:2603.30px;top:838.64px;font-size:22.4px;color:#525f65;-webkit-text-stroke:0.9px #525f65;">8.93</div>
<div class="b" style="left:0px;top:884px;width:2880px;height:2px;background:#ebebeb;"></div>
<svg class="b" style="left:48.3px;top:907px;overflow:visible;" width="36.2" height="25" viewBox="0 0 40 25" preserveAspectRatio="none"><defs><linearGradient id="tg1" x1="0" y1="0" x2="1" y2="1"><stop offset="0" stop-color="#55585e"/><stop offset="1" stop-color="#b3b5b9"/></linearGradient>
<linearGradient id="tg2" x1="0" y1="0" x2="0" y2="1"><stop offset="0" stop-color="#f2f3fa"/><stop offset=".55" stop-color="#e9ebf5"/><stop offset=".6" stop-color="#cfd4e4"/><stop offset="1" stop-color="#dfe2ee"/></linearGradient></defs>
<g>
<path d="M2.57 9.3 L14.75 14.7 L26.3 15.7 L2.57 15.7 Z" fill="url(#tg1)"/>
<path d="M2.2 15.6 H26.8 V16.5 H2.2 Z" fill="#d8d0a2"/>
<path d="M2.2 16.4 H27.3 V19.4 H2.2 Z" fill="#12151a"/>
<path d="M2.6 19.3 H28 V22 H2.6 Z" fill="#2b2d31"/>
<path d="M21.2 20 H26.6 V21 H21.2 Z" fill="#80838a"/>
<path d="M24.4 7.6 L26.8 7.6 L26.8 14.9 L22.8 14.9 Z" fill="#33363e"/>
<path d="M-0.07 6.17 L1.9 0.08 L4.05 0.74 L2.24 6.83 Z" fill="#35373b"/>
<path d="M2.9 0.9 C5.5 0.2 8 0.3 10.1 0.57 C13 1.1 15.6 2 18 3.2 C20.2 4.3 22.2 5.4 23.6 6.4 C24.4 7 24.7 7.5 24.6 8.1 L22.5 14.4 C19.6 14.7 17 14.6 14.75 14.1 C12.3 13.5 10.1 12.6 8.2 11.4 C6 10.2 4 8.8 2.57 7.5 Z" fill="#efb336"/>
<path d="M2.95 6.1 C4.8 7.8 6.8 9.2 8.9 10.3 C11 11.5 13.2 12.5 15.5 13.1 C17.7 13.6 20 13.8 22.8 13.6 L22.5 14.6 C19.6 14.8 17.3 14.7 15.1 14.2 C12.7 13.6 10.5 12.7 8.4 11.5 C6.3 10.3 4.3 8.9 2.6 7.3 Z" fill="#fbe59a"/>
<circle cx="24.8" cy="4.2" r="1.7" fill="#f5a838"/>
<path d="M27.6 3.2 L35.5 2.9 Q37.3 3.1 37.9 5.5 L39.5 11.4 V22 H27.1 V4 Q27.1 3.3 27.6 3.2 Z" fill="#f5b733"/>
<path d="M37.2 12 L39.5 11.4 V22 H36.6 Z" fill="#f8c54e"/>
<path d="M28.9 5.2 L34.8 5.0 Q35.5 5.0 35.7 5.7 L37 10.8 H28.9 Z" fill="url(#tg2)"/>
<rect x="28.9" y="11.9" width="2.6" height="1.2" rx=".5" fill="#4a4030"/>
<circle cx="7.5" cy="22" r="2.95" fill="#1f2023"/><circle cx="7.5" cy="22" r="1.75" fill="#a3a3a3"/><circle cx="7.5" cy="22" r=".7" fill="#5a5a5a"/>
<circle cx="15.9" cy="22" r="2.95" fill="#1f2023"/><circle cx="15.9" cy="22" r="1.75" fill="#a3a3a3"/><circle cx="15.9" cy="22" r=".7" fill="#5a5a5a"/>
<circle cx="31.2" cy="22" r="2.95" fill="#1f2023"/><circle cx="31.2" cy="22" r="1.75" fill="#a3a3a3"/><circle cx="31.2" cy="22" r=".7" fill="#5a5a5a"/>
</g></svg>
<div class="b" style="left:79.3px;top:923.5px;width:8px;height:8px;background:#dc4a22;border-radius:50%;"></div>
<div class="t" style="left:104.30px;top:908.64px;font-size:22.4px;color:#525f65;letter-spacing:0.793px;-webkit-text-stroke:0.9px #525f65;">13/03/2024</div>
<div class="t" style="left:342.00px;top:908.64px;font-size:22.4px;color:#525f65;-webkit-text-stroke:0.9px #525f65;">8</div>
<div class="t" style="left:1267.50px;top:908.64px;font-size:22.4px;color:#525f65;transform:scaleX(0.9806);transform-origin:0 0;-webkit-text-stroke:0.9px #525f65;">BT-05</div>
<div class="t" style="left:1434.70px;top:908.64px;font-size:22.4px;color:#525f65;-webkit-text-stroke:0.9px #525f65;">07:11</div>
<div class="t" style="left:1569.40px;top:908.64px;font-size:22.4px;color:#525f65;-webkit-text-stroke:0.9px #525f65;">66</div>
<div class="t" style="left:1892.80px;top:908.64px;font-size:22.4px;color:#525f65;-webkit-text-stroke:0.9px #525f65;">08:17</div>
<div class="t" style="left:2057.90px;top:908.64px;font-size:22.4px;color:#525f65;-webkit-text-stroke:0.9px #525f65;">10:20</div>
<div class="t" style="left:2229.30px;top:908.64px;font-size:22.4px;color:#525f65;-webkit-text-stroke:0.9px #525f65;">10:40</div>
<div class="t" style="left:2417.90px;top:908.64px;font-size:22.4px;color:#525f65;-webkit-text-stroke:0.9px #525f65;">10:57</div>
<div class="t" style="left:2603.30px;top:908.64px;font-size:22.4px;color:#525f65;-webkit-text-stroke:0.9px #525f65;">13.38</div>
<div class="b" style="left:0px;top:954px;width:2880px;height:2px;background:#ebebeb;"></div>
<svg class="b" style="left:48.3px;top:977px;overflow:visible;" width="36.2" height="25" viewBox="0 0 40 25" preserveAspectRatio="none"><defs><linearGradient id="tg1" x1="0" y1="0" x2="1" y2="1"><stop offset="0" stop-color="#55585e"/><stop offset="1" stop-color="#b3b5b9"/></linearGradient>
<linearGradient id="tg2" x1="0" y1="0" x2="0" y2="1"><stop offset="0" stop-color="#f2f3fa"/><stop offset=".55" stop-color="#e9ebf5"/><stop offset=".6" stop-color="#cfd4e4"/><stop offset="1" stop-color="#dfe2ee"/></linearGradient></defs>
<g>
<path d="M2.57 9.3 L14.75 14.7 L26.3 15.7 L2.57 15.7 Z" fill="url(#tg1)"/>
<path d="M2.2 15.6 H26.8 V16.5 H2.2 Z" fill="#d8d0a2"/>
<path d="M2.2 16.4 H27.3 V19.4 H2.2 Z" fill="#12151a"/>
<path d="M2.6 19.3 H28 V22 H2.6 Z" fill="#2b2d31"/>
<path d="M21.2 20 H26.6 V21 H21.2 Z" fill="#80838a"/>
<path d="M24.4 7.6 L26.8 7.6 L26.8 14.9 L22.8 14.9 Z" fill="#33363e"/>
<path d="M-0.07 6.17 L1.9 0.08 L4.05 0.74 L2.24 6.83 Z" fill="#35373b"/>
<path d="M2.9 0.9 C5.5 0.2 8 0.3 10.1 0.57 C13 1.1 15.6 2 18 3.2 C20.2 4.3 22.2 5.4 23.6 6.4 C24.4 7 24.7 7.5 24.6 8.1 L22.5 14.4 C19.6 14.7 17 14.6 14.75 14.1 C12.3 13.5 10.1 12.6 8.2 11.4 C6 10.2 4 8.8 2.57 7.5 Z" fill="#efb336"/>
<path d="M2.95 6.1 C4.8 7.8 6.8 9.2 8.9 10.3 C11 11.5 13.2 12.5 15.5 13.1 C17.7 13.6 20 13.8 22.8 13.6 L22.5 14.6 C19.6 14.8 17.3 14.7 15.1 14.2 C12.7 13.6 10.5 12.7 8.4 11.5 C6.3 10.3 4.3 8.9 2.6 7.3 Z" fill="#fbe59a"/>
<circle cx="24.8" cy="4.2" r="1.7" fill="#f5a838"/>
<path d="M27.6 3.2 L35.5 2.9 Q37.3 3.1 37.9 5.5 L39.5 11.4 V22 H27.1 V4 Q27.1 3.3 27.6 3.2 Z" fill="#f5b733"/>
<path d="M37.2 12 L39.5 11.4 V22 H36.6 Z" fill="#f8c54e"/>
<path d="M28.9 5.2 L34.8 5.0 Q35.5 5.0 35.7 5.7 L37 10.8 H28.9 Z" fill="url(#tg2)"/>
<rect x="28.9" y="11.9" width="2.6" height="1.2" rx=".5" fill="#4a4030"/>
<circle cx="7.5" cy="22" r="2.95" fill="#1f2023"/><circle cx="7.5" cy="22" r="1.75" fill="#a3a3a3"/><circle cx="7.5" cy="22" r=".7" fill="#5a5a5a"/>
<circle cx="15.9" cy="22" r="2.95" fill="#1f2023"/><circle cx="15.9" cy="22" r="1.75" fill="#a3a3a3"/><circle cx="15.9" cy="22" r=".7" fill="#5a5a5a"/>
<circle cx="31.2" cy="22" r="2.95" fill="#1f2023"/><circle cx="31.2" cy="22" r="1.75" fill="#a3a3a3"/><circle cx="31.2" cy="22" r=".7" fill="#5a5a5a"/>
</g></svg>
<div class="b" style="left:79.3px;top:993.5px;width:8px;height:8px;background:#dc4a22;border-radius:50%;"></div>
<div class="t" style="left:104.30px;top:978.64px;font-size:22.4px;color:#525f65;letter-spacing:0.793px;-webkit-text-stroke:0.9px #525f65;">13/03/2024</div>
<div class="t" style="left:342.00px;top:978.64px;font-size:22.4px;color:#525f65;-webkit-text-stroke:0.9px #525f65;">5</div>
<div class="t" style="left:1267.49px;top:978.64px;font-size:22.4px;color:#525f65;transform:scaleX(0.9868);transform-origin:0 0;-webkit-text-stroke:0.9px #525f65;">BT-023</div>
<div class="t" style="left:1434.70px;top:978.64px;font-size:22.4px;color:#525f65;-webkit-text-stroke:0.9px #525f65;">07:13</div>
<div class="t" style="left:1569.40px;top:978.64px;font-size:22.4px;color:#525f65;-webkit-text-stroke:0.9px #525f65;">18</div>
<div class="t" style="left:1892.80px;top:978.64px;font-size:22.4px;color:#525f65;-webkit-text-stroke:0.9px #525f65;">07:31</div>
<div class="t" style="left:2057.90px;top:978.64px;font-size:22.4px;color:#525f65;-webkit-text-stroke:0.9px #525f65;">08:09</div>
<div class="t" style="left:2229.30px;top:978.64px;font-size:22.4px;color:#525f65;-webkit-text-stroke:0.9px #525f65;">09:11</div>
<div class="t" style="left:2417.90px;top:978.64px;font-size:22.4px;color:#525f65;-webkit-text-stroke:0.9px #525f65;">09:36</div>
<div class="t" style="left:2603.30px;top:978.64px;font-size:22.4px;color:#525f65;-webkit-text-stroke:0.9px #525f65;">13.64</div>
<div class="b" style="left:0px;top:1024px;width:2880px;height:2px;background:#ebebeb;"></div>
<svg class="b" style="left:48.3px;top:1047px;overflow:visible;" width="40" height="25" viewBox="0 0 40 25" ><defs><linearGradient id="tg1" x1="0" y1="0" x2="1" y2="1"><stop offset="0" stop-color="#55585e"/><stop offset="1" stop-color="#b3b5b9"/></linearGradient>
<linearGradient id="tg2" x1="0" y1="0" x2="0" y2="1"><stop offset="0" stop-color="#f2f3fa"/><stop offset=".55" stop-color="#e9ebf5"/><stop offset=".6" stop-color="#cfd4e4"/><stop offset="1" stop-color="#dfe2ee"/></linearGradient></defs>
<g>
<path d="M2.57 9.3 L14.75 14.7 L26.3 15.7 L2.57 15.7 Z" fill="url(#tg1)"/>
<path d="M2.2 15.6 H26.8 V16.5 H2.2 Z" fill="#d8d0a2"/>
<path d="M2.2 16.4 H27.3 V19.4 H2.2 Z" fill="#12151a"/>
<path d="M2.6 19.3 H28 V22 H2.6 Z" fill="#2b2d31"/>
<path d="M21.2 20 H26.6 V21 H21.2 Z" fill="#80838a"/>
<path d="M24.4 7.6 L26.8 7.6 L26.8 14.9 L22.8 14.9 Z" fill="#33363e"/>
<path d="M-0.07 6.17 L1.9 0.08 L4.05 0.74 L2.24 6.83 Z" fill="#35373b"/>
<path d="M2.9 0.9 C5.5 0.2 8 0.3 10.1 0.57 C13 1.1 15.6 2 18 3.2 C20.2 4.3 22.2 5.4 23.6 6.4 C24.4 7 24.7 7.5 24.6 8.1 L22.5 14.4 C19.6 14.7 17 14.6 14.75 14.1 C12.3 13.5 10.1 12.6 8.2 11.4 C6 10.2 4 8.8 2.57 7.5 Z" fill="#efb336"/>
<path d="M2.95 6.1 C4.8 7.8 6.8 9.2 8.9 10.3 C11 11.5 13.2 12.5 15.5 13.1 C17.7 13.6 20 13.8 22.8 13.6 L22.5 14.6 C19.6 14.8 17.3 14.7 15.1 14.2 C12.7 13.6 10.5 12.7 8.4 11.5 C6.3 10.3 4.3 8.9 2.6 7.3 Z" fill="#fbe59a"/>
<circle cx="24.8" cy="4.2" r="1.7" fill="#f5a838"/>
<path d="M27.6 3.2 L35.5 2.9 Q37.3 3.1 37.9 5.5 L39.5 11.4 V22 H27.1 V4 Q27.1 3.3 27.6 3.2 Z" fill="#f5b733"/>
<path d="M37.2 12 L39.5 11.4 V22 H36.6 Z" fill="#f8c54e"/>
<path d="M28.9 5.2 L34.8 5.0 Q35.5 5.0 35.7 5.7 L37 10.8 H28.9 Z" fill="url(#tg2)"/>
<rect x="28.9" y="11.9" width="2.6" height="1.2" rx=".5" fill="#4a4030"/>
<circle cx="7.5" cy="22" r="2.95" fill="#1f2023"/><circle cx="7.5" cy="22" r="1.75" fill="#a3a3a3"/><circle cx="7.5" cy="22" r=".7" fill="#5a5a5a"/>
<circle cx="15.9" cy="22" r="2.95" fill="#1f2023"/><circle cx="15.9" cy="22" r="1.75" fill="#a3a3a3"/><circle cx="15.9" cy="22" r=".7" fill="#5a5a5a"/>
<circle cx="31.2" cy="22" r="2.95" fill="#1f2023"/><circle cx="31.2" cy="22" r="1.75" fill="#a3a3a3"/><circle cx="31.2" cy="22" r=".7" fill="#5a5a5a"/>
</g></svg>
<div class="t" style="left:104.30px;top:1048.64px;font-size:22.4px;color:#525f65;letter-spacing:0.793px;-webkit-text-stroke:0.9px #525f65;">13/03/2024</div>
<div class="t" style="left:342.00px;top:1048.64px;font-size:22.4px;color:#525f65;-webkit-text-stroke:0.9px #525f65;">5</div>
<div class="t" style="left:1267.50px;top:1048.64px;font-size:22.4px;color:#525f65;transform:scaleX(0.9813);transform-origin:0 0;-webkit-text-stroke:0.9px #525f65;">BT-03</div>
<div class="t" style="left:1434.70px;top:1048.64px;font-size:22.4px;color:#525f65;-webkit-text-stroke:0.9px #525f65;">07:27</div>
<div class="t" style="left:1569.40px;top:1048.64px;font-size:22.4px;color:#525f65;-webkit-text-stroke:0.9px #525f65;">20</div>
<div class="t" style="left:1892.80px;top:1048.64px;font-size:22.4px;color:#525f65;-webkit-text-stroke:0.9px #525f65;">07:47</div>
<div class="t" style="left:2057.90px;top:1048.64px;font-size:22.4px;color:#525f65;-webkit-text-stroke:0.9px #525f65;">08:00</div>
<div class="t" style="left:2229.30px;top:1048.64px;font-size:22.4px;color:#525f65;-webkit-text-stroke:0.9px #525f65;">09:34</div>
<div class="t" style="left:2417.90px;top:1048.64px;font-size:22.4px;color:#525f65;-webkit-text-stroke:0.9px #525f65;">09:48</div>
<div class="t" style="left:2603.30px;top:1048.64px;font-size:22.4px;color:#525f65;-webkit-text-stroke:0.9px #525f65;">8.91</div>
<div class="b" style="left:0px;top:1094px;width:2880px;height:2px;background:#ebebeb;"></div>
<svg class="b" style="left:48.3px;top:1117px;overflow:visible;" width="40" height="25" viewBox="0 0 40 25" ><defs><linearGradient id="tg1" x1="0" y1="0" x2="1" y2="1"><stop offset="0" stop-color="#55585e"/><stop offset="1" stop-color="#b3b5b9"/></linearGradient>
<linearGradient id="tg2" x1="0" y1="0" x2="0" y2="1"><stop offset="0" stop-color="#f2f3fa"/><stop offset=".55" stop-color="#e9ebf5"/><stop offset=".6" stop-color="#cfd4e4"/><stop offset="1" stop-color="#dfe2ee"/></linearGradient></defs>
<g>
<path d="M2.57 9.3 L14.75 14.7 L26.3 15.7 L2.57 15.7 Z" fill="url(#tg1)"/>
<path d="M2.2 15.6 H26.8 V16.5 H2.2 Z" fill="#d8d0a2"/>
<path d="M2.2 16.4 H27.3 V19.4 H2.2 Z" fill="#12151a"/>
<path d="M2.6 19.3 H28 V22 H2.6 Z" fill="#2b2d31"/>
<path d="M21.2 20 H26.6 V21 H21.2 Z" fill="#80838a"/>
<path d="M24.4 7.6 L26.8 7.6 L26.8 14.9 L22.8 14.9 Z" fill="#33363e"/>
<path d="M-0.07 6.17 L1.9 0.08 L4.05 0.74 L2.24 6.83 Z" fill="#35373b"/>
<path d="M2.9 0.9 C5.5 0.2 8 0.3 10.1 0.57 C13 1.1 15.6 2 18 3.2 C20.2 4.3 22.2 5.4 23.6 6.4 C24.4 7 24.7 7.5 24.6 8.1 L22.5 14.4 C19.6 14.7 17 14.6 14.75 14.1 C12.3 13.5 10.1 12.6 8.2 11.4 C6 10.2 4 8.8 2.57 7.5 Z" fill="#efb336"/>
<path d="M2.95 6.1 C4.8 7.8 6.8 9.2 8.9 10.3 C11 11.5 13.2 12.5 15.5 13.1 C17.7 13.6 20 13.8 22.8 13.6 L22.5 14.6 C19.6 14.8 17.3 14.7 15.1 14.2 C12.7 13.6 10.5 12.7 8.4 11.5 C6.3 10.3 4.3 8.9 2.6 7.3 Z" fill="#fbe59a"/>
<circle cx="24.8" cy="4.2" r="1.7" fill="#f5a838"/>
<path d="M27.6 3.2 L35.5 2.9 Q37.3 3.1 37.9 5.5 L39.5 11.4 V22 H27.1 V4 Q27.1 3.3 27.6 3.2 Z" fill="#f5b733"/>
<path d="M37.2 12 L39.5 11.4 V22 H36.6 Z" fill="#f8c54e"/>
<path d="M28.9 5.2 L34.8 5.0 Q35.5 5.0 35.7 5.7 L37 10.8 H28.9 Z" fill="url(#tg2)"/>
<rect x="28.9" y="11.9" width="2.6" height="1.2" rx=".5" fill="#4a4030"/>
<circle cx="7.5" cy="22" r="2.95" fill="#1f2023"/><circle cx="7.5" cy="22" r="1.75" fill="#a3a3a3"/><circle cx="7.5" cy="22" r=".7" fill="#5a5a5a"/>
<circle cx="15.9" cy="22" r="2.95" fill="#1f2023"/><circle cx="15.9" cy="22" r="1.75" fill="#a3a3a3"/><circle cx="15.9" cy="22" r=".7" fill="#5a5a5a"/>
<circle cx="31.2" cy="22" r="2.95" fill="#1f2023"/><circle cx="31.2" cy="22" r="1.75" fill="#a3a3a3"/><circle cx="31.2" cy="22" r=".7" fill="#5a5a5a"/>
</g></svg>
<div class="t" style="left:104.30px;top:1118.64px;font-size:22.4px;color:#525f65;letter-spacing:0.793px;-webkit-text-stroke:0.9px #525f65;">13/03/2024</div>
<div class="t" style="left:342.00px;top:1118.64px;font-size:22.4px;color:#525f65;-webkit-text-stroke:0.9px #525f65;">5</div>
<div class="t" style="left:1267.50px;top:1118.64px;font-size:22.4px;color:#525f65;transform:scaleX(0.9792);transform-origin:0 0;-webkit-text-stroke:0.9px #525f65;">BET-20500</div>
<div class="t" style="left:1434.70px;top:1118.64px;font-size:22.4px;color:#525f65;-webkit-text-stroke:0.9px #525f65;">07:37</div>
<div class="t" style="left:1569.40px;top:1118.64px;font-size:22.4px;color:#525f65;-webkit-text-stroke:0.9px #525f65;">22</div>
<div class="t" style="left:1892.80px;top:1118.64px;font-size:22.4px;color:#525f65;-webkit-text-stroke:0.9px #525f65;">07:58</div>
<div class="t" style="left:2057.90px;top:1118.64px;font-size:22.4px;color:#525f65;-webkit-text-stroke:0.9px #525f65;">08:38</div>
<div class="t" style="left:2229.30px;top:1118.64px;font-size:22.4px;color:#525f65;-webkit-text-stroke:0.9px #525f65;">09:30</div>
<div class="t" style="left:2417.90px;top:1118.64px;font-size:22.4px;color:#525f65;-webkit-text-stroke:0.9px #525f65;">10:00</div>
<div class="t" style="left:2603.30px;top:1118.64px;font-size:22.4px;color:#525f65;-webkit-text-stroke:0.9px #525f65;">13.43</div>
<div class="b" style="left:0px;top:1164px;width:2880px;height:2px;background:#ebebeb;"></div>
<svg class="b" style="left:48.3px;top:1187px;overflow:visible;" width="36.2" height="25" viewBox="0 0 40 25" preserveAspectRatio="none"><defs><linearGradient id="tg1" x1="0" y1="0" x2="1" y2="1"><stop offset="0" stop-color="#55585e"/><stop offset="1" stop-color="#b3b5b9"/></linearGradient>
<linearGradient id="tg2" x1="0" y1="0" x2="0" y2="1"><stop offset="0" stop-color="#f2f3fa"/><stop offset=".55" stop-color="#e9ebf5"/><stop offset=".6" stop-color="#cfd4e4"/><stop offset="1" stop-color="#dfe2ee"/></linearGradient></defs>
<g>
<path d="M2.57 9.3 L14.75 14.7 L26.3 15.7 L2.57 15.7 Z" fill="url(#tg1)"/>
<path d="M2.2 15.6 H26.8 V16.5 H2.2 Z" fill="#d8d0a2"/>
<path d="M2.2 16.4 H27.3 V19.4 H2.2 Z" fill="#12151a"/>
<path d="M2.6 19.3 H28 V22 H2.6 Z" fill="#2b2d31"/>
<path d="M21.2 20 H26.6 V21 H21.2 Z" fill="#80838a"/>
<path d="M24.4 7.6 L26.8 7.6 L26.8 14.9 L22.8 14.9 Z" fill="#33363e"/>
<path d="M-0.07 6.17 L1.9 0.08 L4.05 0.74 L2.24 6.83 Z" fill="#35373b"/>
<path d="M2.9 0.9 C5.5 0.2 8 0.3 10.1 0.57 C13 1.1 15.6 2 18 3.2 C20.2 4.3 22.2 5.4 23.6 6.4 C24.4 7 24.7 7.5 24.6 8.1 L22.5 14.4 C19.6 14.7 17 14.6 14.75 14.1 C12.3 13.5 10.1 12.6 8.2 11.4 C6 10.2 4 8.8 2.57 7.5 Z" fill="#efb336"/>
<path d="M2.95 6.1 C4.8 7.8 6.8 9.2 8.9 10.3 C11 11.5 13.2 12.5 15.5 13.1 C17.7 13.6 20 13.8 22.8 13.6 L22.5 14.6 C19.6 14.8 17.3 14.7 15.1 14.2 C12.7 13.6 10.5 12.7 8.4 11.5 C6.3 10.3 4.3 8.9 2.6 7.3 Z" fill="#fbe59a"/>
<circle cx="24.8" cy="4.2" r="1.7" fill="#f5a838"/>
<path d="M27.6 3.2 L35.5 2.9 Q37.3 3.1 37.9 5.5 L39.5 11.4 V22 H27.1 V4 Q27.1 3.3 27.6 3.2 Z" fill="#f5b733"/>
<path d="M37.2 12 L39.5 11.4 V22 H36.6 Z" fill="#f8c54e"/>
<path d="M28.9 5.2 L34.8 5.0 Q35.5 5.0 35.7 5.7 L37 10.8 H28.9 Z" fill="url(#tg2)"/>
<rect x="28.9" y="11.9" width="2.6" height="1.2" rx=".5" fill="#4a4030"/>
<circle cx="7.5" cy="22" r="2.95" fill="#1f2023"/><circle cx="7.5" cy="22" r="1.75" fill="#a3a3a3"/><circle cx="7.5" cy="22" r=".7" fill="#5a5a5a"/>
<circle cx="15.9" cy="22" r="2.95" fill="#1f2023"/><circle cx="15.9" cy="22" r="1.75" fill="#a3a3a3"/><circle cx="15.9" cy="22" r=".7" fill="#5a5a5a"/>
<circle cx="31.2" cy="22" r="2.95" fill="#1f2023"/><circle cx="31.2" cy="22" r="1.75" fill="#a3a3a3"/><circle cx="31.2" cy="22" r=".7" fill="#5a5a5a"/>
</g></svg>
<div class="b" style="left:79.3px;top:1203.5px;width:8px;height:8px;background:#dc4a22;border-radius:50%;"></div>
<div class="t" style="left:104.30px;top:1188.64px;font-size:22.4px;color:#525f65;letter-spacing:0.793px;-webkit-text-stroke:0.9px #525f65;">13/03/2024</div>
<div class="t" style="left:342.00px;top:1188.64px;font-size:22.4px;color:#525f65;-webkit-text-stroke:0.9px #525f65;">5</div>
<div class="t" style="left:1267.50px;top:1188.64px;font-size:22.4px;color:#525f65;transform:scaleX(0.9792);transform-origin:0 0;-webkit-text-stroke:0.9px #525f65;">BET-19200</div>
<div class="t" style="left:1434.70px;top:1188.64px;font-size:22.4px;color:#525f65;-webkit-text-stroke:0.9px #525f65;">07:54</div>
<div class="t" style="left:1569.40px;top:1188.64px;font-size:22.4px;color:#525f65;-webkit-text-stroke:0.9px #525f65;">23</div>
<div class="t" style="left:1892.80px;top:1188.64px;font-size:22.4px;color:#525f65;-webkit-text-stroke:0.9px #525f65;">08:17</div>
<div class="t" style="left:2057.90px;top:1188.64px;font-size:22.4px;color:#525f65;-webkit-text-stroke:0.9px #525f65;">08:17</div>
<div class="t" style="left:2229.30px;top:1188.64px;font-size:22.4px;color:#525f65;-webkit-text-stroke:0.9px #525f65;">09:32</div>
<div class="t" style="left:2417.90px;top:1188.64px;font-size:22.4px;color:#525f65;-webkit-text-stroke:0.9px #525f65;">09:32</div>
<div class="t" style="left:2603.30px;top:1188.64px;font-size:22.4px;color:#525f65;-webkit-text-stroke:0.9px #525f65;">0.17</div>
<div class="b" style="left:0px;top:1234px;width:2880px;height:2px;background:#ebebeb;"></div>
<svg class="b" style="left:48.3px;top:1257px;overflow:visible;" width="40" height="25" viewBox="0 0 40 25" ><defs><linearGradient id="tg1" x1="0" y1="0" x2="1" y2="1"><stop offset="0" stop-color="#55585e"/><stop offset="1" stop-color="#b3b5b9"/></linearGradient>
<linearGradient id="tg2" x1="0" y1="0" x2="0" y2="1"><stop offset="0" stop-color="#f2f3fa"/><stop offset=".55" stop-color="#e9ebf5"/><stop offset=".6" stop-color="#cfd4e4"/><stop offset="1" stop-color="#dfe2ee"/></linearGradient></defs>
<g>
<path d="M2.57 9.3 L14.75 14.7 L26.3 15.7 L2.57 15.7 Z" fill="url(#tg1)"/>
<path d="M2.2 15.6 H26.8 V16.5 H2.2 Z" fill="#d8d0a2"/>
<path d="M2.2 16.4 H27.3 V19.4 H2.2 Z" fill="#12151a"/>
<path d="M2.6 19.3 H28 V22 H2.6 Z" fill="#2b2d31"/>
<path d="M21.2 20 H26.6 V21 H21.2 Z" fill="#80838a"/>
<path d="M24.4 7.6 L26.8 7.6 L26.8 14.9 L22.8 14.9 Z" fill="#33363e"/>
<path d="M-0.07 6.17 L1.9 0.08 L4.05 0.74 L2.24 6.83 Z" fill="#35373b"/>
<path d="M2.9 0.9 C5.5 0.2 8 0.3 10.1 0.57 C13 1.1 15.6 2 18 3.2 C20.2 4.3 22.2 5.4 23.6 6.4 C24.4 7 24.7 7.5 24.6 8.1 L22.5 14.4 C19.6 14.7 17 14.6 14.75 14.1 C12.3 13.5 10.1 12.6 8.2 11.4 C6 10.2 4 8.8 2.57 7.5 Z" fill="#efb336"/>
<path d="M2.95 6.1 C4.8 7.8 6.8 9.2 8.9 10.3 C11 11.5 13.2 12.5 15.5 13.1 C17.7 13.6 20 13.8 22.8 13.6 L22.5 14.6 C19.6 14.8 17.3 14.7 15.1 14.2 C12.7 13.6 10.5 12.7 8.4 11.5 C6.3 10.3 4.3 8.9 2.6 7.3 Z" fill="#fbe59a"/>
<circle cx="24.8" cy="4.2" r="1.7" fill="#f5a838"/>
<path d="M27.6 3.2 L35.5 2.9 Q37.3 3.1 37.9 5.5 L39.5 11.4 V22 H27.1 V4 Q27.1 3.3 27.6 3.2 Z" fill="#f5b733"/>
<path d="M37.2 12 L39.5 11.4 V22 H36.6 Z" fill="#f8c54e"/>
<path d="M28.9 5.2 L34.8 5.0 Q35.5 5.0 35.7 5.7 L37 10.8 H28.9 Z" fill="url(#tg2)"/>
<rect x="28.9" y="11.9" width="2.6" height="1.2" rx=".5" fill="#4a4030"/>
<circle cx="7.5" cy="22" r="2.95" fill="#1f2023"/><circle cx="7.5" cy="22" r="1.75" fill="#a3a3a3"/><circle cx="7.5" cy="22" r=".7" fill="#5a5a5a"/>
<circle cx="15.9" cy="22" r="2.95" fill="#1f2023"/><circle cx="15.9" cy="22" r="1.75" fill="#a3a3a3"/><circle cx="15.9" cy="22" r=".7" fill="#5a5a5a"/>
<circle cx="31.2" cy="22" r="2.95" fill="#1f2023"/><circle cx="31.2" cy="22" r="1.75" fill="#a3a3a3"/><circle cx="31.2" cy="22" r=".7" fill="#5a5a5a"/>
</g></svg>
<div class="t" style="left:104.30px;top:1258.64px;font-size:22.4px;color:#525f65;letter-spacing:0.793px;-webkit-text-stroke:0.9px #525f65;">13/03/2024</div>
<div class="t" style="left:342.00px;top:1258.64px;font-size:22.4px;color:#525f65;-webkit-text-stroke:0.9px #525f65;">1</div>
<div class="t" style="left:1267.50px;top:1258.64px;font-size:22.4px;color:#525f65;transform:scaleX(0.9792);transform-origin:0 0;-webkit-text-stroke:0.9px #525f65;">BET-19000</div>
<div class="t" style="left:1434.70px;top:1258.64px;font-size:22.4px;color:#525f65;-webkit-text-stroke:0.9px #525f65;">08:00</div>
<div class="t" style="left:1569.40px;top:1258.64px;font-size:22.4px;color:#525f65;-webkit-text-stroke:0.9px #525f65;">39</div>
<div class="t" style="left:1892.80px;top:1258.64px;font-size:22.4px;color:#525f65;-webkit-text-stroke:0.9px #525f65;">08:38</div>
<div class="t" style="left:2057.90px;top:1258.64px;font-size:22.4px;color:#525f65;-webkit-text-stroke:0.9px #525f65;">08:58</div>
<div class="t" style="left:2229.30px;top:1258.64px;font-size:22.4px;color:#525f65;-webkit-text-stroke:0.9px #525f65;">10:13</div>
<div class="t" style="left:2417.90px;top:1258.64px;font-size:22.4px;color:#525f65;-webkit-text-stroke:0.9px #525f65;">10:38</div>
<div class="t" style="left:2603.30px;top:1258.64px;font-size:22.4px;color:#525f65;-webkit-text-stroke:0.9px #525f65;">12.57</div>
<div class="b" style="left:0px;top:1304px;width:2880px;height:2px;background:#ebebeb;"></div>
<svg class="b" style="left:48.3px;top:1327px;overflow:visible;" width="40" height="25" viewBox="0 0 40 25" ><defs><linearGradient id="tg1" x1="0" y1="0" x2="1" y2="1"><stop offset="0" stop-color="#55585e"/><stop offset="1" stop-color="#b3b5b9"/></linearGradient>
<linearGradient id="tg2" x1="0" y1="0" x2="0" y2="1"><stop offset="0" stop-color="#f2f3fa"/><stop offset=".55" stop-color="#e9ebf5"/><stop offset=".6" stop-color="#cfd4e4"/><stop offset="1" stop-color="#dfe2ee"/></linearGradient></defs>
<g>
<path d="M2.57 9.3 L14.75 14.7 L26.3 15.7 L2.57 15.7 Z" fill="url(#tg1)"/>
<path d="M2.2 15.6 H26.8 V16.5 H2.2 Z" fill="#d8d0a2"/>
<path d="M2.2 16.4 H27.3 V19.4 H2.2 Z" fill="#12151a"/>
<path d="M2.6 19.3 H28 V22 H2.6 Z" fill="#2b2d31"/>
<path d="M21.2 20 H26.6 V21 H21.2 Z" fill="#80838a"/>
<path d="M24.4 7.6 L26.8 7.6 L26.8 14.9 L22.8 14.9 Z" fill="#33363e"/>
<path d="M-0.07 6.17 L1.9 0.08 L4.05 0.74 L2.24 6.83 Z" fill="#35373b"/>
<path d="M2.9 0.9 C5.5 0.2 8 0.3 10.1 0.57 C13 1.1 15.6 2 18 3.2 C20.2 4.3 22.2 5.4 23.6 6.4 C24.4 7 24.7 7.5 24.6 8.1 L22.5 14.4 C19.6 14.7 17 14.6 14.75 14.1 C12.3 13.5 10.1 12.6 8.2 11.4 C6 10.2 4 8.8 2.57 7.5 Z" fill="#efb336"/>
<path d="M2.95 6.1 C4.8 7.8 6.8 9.2 8.9 10.3 C11 11.5 13.2 12.5 15.5 13.1 C17.7 13.6 20 13.8 22.8 13.6 L22.5 14.6 C19.6 14.8 17.3 14.7 15.1 14.2 C12.7 13.6 10.5 12.7 8.4 11.5 C6.3 10.3 4.3 8.9 2.6 7.3 Z" fill="#fbe59a"/>
<circle cx="24.8" cy="4.2" r="1.7" fill="#f5a838"/>
<path d="M27.6 3.2 L35.5 2.9 Q37.3 3.1 37.9 5.5 L39.5 11.4 V22 H27.1 V4 Q27.1 3.3 27.6 3.2 Z" fill="#f5b733"/>
<path d="M37.2 12 L39.5 11.4 V22 H36.6 Z" fill="#f8c54e"/>
<path d="M28.9 5.2 L34.8 5.0 Q35.5 5.0 35.7 5.7 L37 10.8 H28.9 Z" fill="url(#tg2)"/>
<rect x="28.9" y="11.9" width="2.6" height="1.2" rx=".5" fill="#4a4030"/>
<circle cx="7.5" cy="22" r="2.95" fill="#1f2023"/><circle cx="7.5" cy="22" r="1.75" fill="#a3a3a3"/><circle cx="7.5" cy="22" r=".7" fill="#5a5a5a"/>
<circle cx="15.9" cy="22" r="2.95" fill="#1f2023"/><circle cx="15.9" cy="22" r="1.75" fill="#a3a3a3"/><circle cx="15.9" cy="22" r=".7" fill="#5a5a5a"/>
<circle cx="31.2" cy="22" r="2.95" fill="#1f2023"/><circle cx="31.2" cy="22" r="1.75" fill="#a3a3a3"/><circle cx="31.2" cy="22" r=".7" fill="#5a5a5a"/>
</g></svg>
<div class="t" style="left:104.30px;top:1328.64px;font-size:22.4px;color:#525f65;letter-spacing:0.793px;-webkit-text-stroke:0.9px #525f65;">13/03/2024</div>
<div class="t" style="left:342.00px;top:1328.64px;font-size:22.4px;color:#525f65;-webkit-text-stroke:0.9px #525f65;">5</div>
<div class="t" style="left:1267.50px;top:1328.64px;font-size:22.4px;color:#525f65;transform:scaleX(0.9823);transform-origin:0 0;-webkit-text-stroke:0.9px #525f65;">BT-024</div>
<div class="t" style="left:1434.70px;top:1328.64px;font-size:22.4px;color:#525f65;-webkit-text-stroke:0.9px #525f65;">08:14</div>
<div class="t" style="left:1569.40px;top:1328.64px;font-size:22.4px;color:#525f65;-webkit-text-stroke:0.9px #525f65;">16</div>
<div class="t" style="left:1892.80px;top:1328.64px;font-size:22.4px;color:#525f65;-webkit-text-stroke:0.9px #525f65;">08:30</div>
<div class="t" style="left:2057.90px;top:1328.64px;font-size:22.4px;color:#525f65;-webkit-text-stroke:0.9px #525f65;">09:06</div>
<div class="t" style="left:2229.30px;top:1328.64px;font-size:22.4px;color:#525f65;-webkit-text-stroke:0.9px #525f65;">09:52</div>
<div class="t" style="left:2417.90px;top:1328.64px;font-size:22.4px;color:#525f65;-webkit-text-stroke:0.9px #525f65;">10:30</div>
<div class="t" style="left:2603.30px;top:1328.64px;font-size:22.4px;color:#525f65;-webkit-text-stroke:0.9px #525f65;">13.69</div>
<div class="b" style="left:525px;top:684px;width:619px;height:664px;background:#fff;overflow:hidden;">
<div class="b" style="left:0px;top:0px;width:619px;height:7px;background:#fcfcfc;"></div>
<div class="b" style="left:0px;top:36px;width:619px;height:29px;background:#fdfdfd;"></div>
<div class="b" style="left:0px;top:181px;width:619px;height:29px;background:#fdfdfd;"></div>
<div class="b" style="left:0px;top:326px;width:619px;height:29px;background:#fdfdfd;"></div>
<div class="b" style="left:0px;top:384px;width:619px;height:29px;background:#fdfdfd;"></div>
<div class="b" style="left:0px;top:471px;width:619px;height:29px;background:#fdfdfd;"></div>
<div class="b" style="left:0px;top:529px;width:619px;height:29px;background:#fdfdfd;"></div>
<div class="b" style="left:0px;top:587px;width:619px;height:29px;background:#fdfdfd;"></div>
<div class="b" style="left:26px;top:7px;width:29px;height:29px;background:#c6c9cb;"></div>
<div class="b" style="left:55px;top:7px;width:29px;height:29px;background:#c5c8c9;"></div>
<div class="b" style="left:84px;top:7px;width:29px;height:29px;background:#c0c4c5;"></div>
<div class="b" style="left:113px;top:7px;width:29px;height:29px;background:#d6d7d8;"></div>
<div class="b" style="left:142px;top:7px;width:29px;height:29px;background:#c5c8c9;"></div>
<div class="b" style="left:171px;top:7px;width:29px;height:29px;background:#c1c4c5;"></div>
<div class="b" style="left:200px;top:7px;width:29px;height:29px;background:#bcc0c1;"></div>
<div class="b" style="left:229px;top:7px;width:29px;height:29px;background:#c2c5c6;"></div>
<div class="b" style="left:258px;top:7px;width:29px;height:29px;background:#f2f4f3;"></div>
<div class="b" style="left:374px;top:7px;width:29px;height:29px;background:#e8e9ea;"></div>
<div class="b" style="left:403px;top:7px;width:29px;height:29px;background:#babebf;"></div>
<div class="b" style="left:432px;top:7px;width:29px;height:29px;background:#cbcecf;"></div>
<div class="b" style="left:461px;top:7px;width:29px;height:29px;background:#c6c9ca;"></div>
<div class="b" style="left:26px;top:65px;width:29px;height:29px;background:#e4e6e5;"></div>
<div class="b" style="left:55px;top:65px;width:29px;height:29px;background:#e1e3e2;"></div>
<div class="b" style="left:84px;top:65px;width:29px;height:29px;background:#e6e7e8;"></div>
<div class="b" style="left:113px;top:65px;width:29px;height:29px;background:#e4e6e5;"></div>
<div class="b" style="left:142px;top:65px;width:29px;height:29px;background:#e5e6e7;"></div>
<div class="b" style="left:171px;top:65px;width:29px;height:29px;background:#f1f3f2;"></div>
<div class="b" style="left:374px;top:65px;width:29px;height:29px;background:#f3f3f3;"></div>
<div class="b" style="left:403px;top:65px;width:29px;height:29px;background:#e3e4e5;"></div>
<div class="b" style="left:432px;top:65px;width:29px;height:29px;background:#eceded;"></div>
<div class="b" style="left:461px;top:65px;width:29px;height:29px;background:#e5e6e7;"></div>
<div class="b" style="left:490px;top:65px;width:29px;height:29px;background:#e6e8e7;"></div>
<div class="b" style="left:519px;top:65px;width:29px;height:29px;background:#e5e6e5;"></div>
<div class="b" style="left:26px;top:152px;width:29px;height:29px;background:#d5d9da;"></div>
<div class="b" style="left:55px;top:152px;width:29px;height:29px;background:#cfd3d4;"></div>
<div class="b" style="left:84px;top:152px;width:29px;height:29px;background:#d8dbdc;"></div>
<div class="b" style="left:113px;top:152px;width:29px;height:29px;background:#cfd3d5;"></div>
<div class="b" style="left:142px;top:152px;width:29px;height:29px;background:#d3d6d8;"></div>
<div class="b" style="left:171px;top:152px;width:29px;height:29px;background:#ecedee;"></div>
<div class="b" style="left:374px;top:152px;width:29px;height:29px;background:#eef0f0;"></div>
<div class="b" style="left:403px;top:152px;width:29px;height:29px;background:#d0d4d6;"></div>
<div class="b" style="left:432px;top:152px;width:29px;height:29px;background:#e4e6e6;"></div>
<div class="b" style="left:461px;top:152px;width:29px;height:29px;background:#d1d5d7;"></div>
<div class="b" style="left:490px;top:152px;width:29px;height:29px;background:#cfd3d5;"></div>
<div class="b" style="left:519px;top:152px;width:29px;height:29px;background:#dadbdd;"></div>
<div class="b" style="left:26px;top:210px;width:29px;height:29px;background:#d5d6d8;"></div>
<div class="b" style="left:55px;top:210px;width:29px;height:29px;background:#cdd1d2;"></div>
<div class="b" style="left:84px;top:210px;width:29px;height:29px;background:#ced2d3;"></div>
<div class="b" style="left:113px;top:210px;width:29px;height:29px;background:#eceeed;"></div>
<div class="b" style="left:374px;top:210px;width:29px;height:29px;background:#eceeed;"></div>
<div class="b" style="left:403px;top:210px;width:29px;height:29px;background:#c9cdcf;"></div>
<div class="b" style="left:432px;top:210px;width:29px;height:29px;background:#ced1d3;"></div>
<div class="b" style="left:461px;top:210px;width:29px;height:29px;background:#ced1d3;"></div>
<div class="b" style="left:490px;top:210px;width:29px;height:29px;background:#dcdedf;"></div>
<div class="b" style="left:519px;top:210px;width:29px;height:29px;background:#dbdedf;"></div>
<div class="b" style="left:548px;top:210px;width:29px;height:29px;background:#c8ccce;"></div>
<div class="b" style="left:577px;top:210px;width:29px;height:29px;background:#d2d5d7;"></div>
<div class="b" style="left:606px;top:210px;width:13px;height:29px;background:#dfe0e1;"></div>
<div class="b" style="left:26px;top:268px;width:29px;height:29px;background:#fcfcfc;"></div>
<div class="b" style="left:55px;top:268px;width:29px;height:29px;background:#fcfcfc;"></div>
<div class="b" style="left:84px;top:268px;width:29px;height:29px;background:#fcfcfc;"></div>
<div class="b" style="left:113px;top:268px;width:29px;height:29px;background:#fcfcfc;"></div>
<div class="b" style="left:142px;top:268px;width:29px;height:29px;background:#fcfcfc;"></div>
<div class="b" style="left:171px;top:268px;width:29px;height:29px;background:#fcfcfc;"></div>
<div class="b" style="left:374px;top:268px;width:29px;height:29px;background:#ffffff;"></div>
<div class="b" style="left:403px;top:268px;width:29px;height:29px;background:#fbfbfb;"></div>
<div class="b" style="left:432px;top:268px;width:29px;height:29px;background:#fbfbfb;"></div>
<div class="b" style="left:461px;top:268px;width:29px;height:29px;background:#fbfbfb;"></div>
<div class="b" style="left:490px;top:268px;width:29px;height:29px;background:#fbfbfb;"></div>
<div class="b" style="left:519px;top:268px;width:29px;height:29px;background:#fbfbfb;"></div>
<div class="b" style="left:26px;top:297px;width:29px;height:29px;background:#e9ebeb;"></div>
<div class="b" style="left:55px;top:297px;width:29px;height:29px;background:#e8eaea;"></div>
<div class="b" style="left:84px;top:297px;width:29px;height:29px;background:#eceeed;"></div>
<div class="b" style="left:113px;top:297px;width:29px;height:29px;background:#e3e5e6;"></div>
<div class="b" style="left:142px;top:297px;width:29px;height:29px;background:#e5e7e7;"></div>
<div class="b" style="left:171px;top:297px;width:29px;height:29px;background:#f2f4f3;"></div>
<div class="b" style="left:374px;top:297px;width:29px;height:29px;background:#f5f6f6;"></div>
<div class="b" style="left:403px;top:297px;width:29px;height:29px;background:#e4e6e7;"></div>
<div class="b" style="left:432px;top:297px;width:29px;height:29px;background:#eef0ef;"></div>
<div class="b" style="left:461px;top:297px;width:29px;height:29px;background:#e6e8e8;"></div>
<div class="b" style="left:490px;top:297px;width:29px;height:29px;background:#e5e7e8;"></div>
<div class="b" style="left:519px;top:297px;width:29px;height:29px;background:#e6e7e8;"></div>
<div class="b" style="left:26px;top:355px;width:29px;height:29px;background:#c5c9ca;"></div>
<div class="b" style="left:55px;top:355px;width:29px;height:29px;background:#bec2c3;"></div>
<div class="b" style="left:84px;top:355px;width:29px;height:29px;background:#c9cccd;"></div>
<div class="b" style="left:113px;top:355px;width:29px;height:29px;background:#c1c5c6;"></div>
<div class="b" style="left:142px;top:355px;width:29px;height:29px;background:#c5c8c9;"></div>
<div class="b" style="left:171px;top:355px;width:29px;height:29px;background:#e3e4e5;"></div>
<div class="b" style="left:374px;top:355px;width:29px;height:29px;background:#e6e8e8;"></div>
<div class="b" style="left:403px;top:355px;width:29px;height:29px;background:#bfc3c6;"></div>
<div class="b" style="left:432px;top:355px;width:29px;height:29px;background:#d5d9da;"></div>
<div class="b" style="left:461px;top:355px;width:29px;height:29px;background:#c2c6c7;"></div>
<div class="b" style="left:490px;top:355px;width:29px;height:29px;background:#c3c7c8;"></div>
<div class="b" style="left:519px;top:355px;width:29px;height:29px;background:#c5c9ca;"></div>
<div class="b" style="left:26px;top:413px;width:29px;height:29px;background:#e9ebeb;"></div>
<div class="b" style="left:55px;top:413px;width:29px;height:29px;background:#e8eaea;"></div>
<div class="b" style="left:84px;top:413px;width:29px;height:29px;background:#ecedee;"></div>
<div class="b" style="left:113px;top:413px;width:29px;height:29px;background:#ebeded;"></div>
<div class="b" style="left:142px;top:413px;width:29px;height:29px;background:#ebeded;"></div>
<div class="b" style="left:171px;top:413px;width:29px;height:29px;background:#f3f5f4;"></div>
<div class="b" style="left:374px;top:413px;width:29px;height:29px;background:#f6f8f7;"></div>
<div class="b" style="left:403px;top:413px;width:29px;height:29px;background:#e9ebeb;"></div>
<div class="b" style="left:432px;top:413px;width:29px;height:29px;background:#eff1f0;"></div>
<div class="b" style="left:461px;top:413px;width:29px;height:29px;background:#ebecee;"></div>
<div class="b" style="left:490px;top:413px;width:29px;height:29px;background:#eef0ef;"></div>
<div class="b" style="left:519px;top:413px;width:29px;height:29px;background:#e9eaeb;"></div>
<div class="b" style="left:26px;top:442px;width:29px;height:29px;background:#fafafa;"></div>
<div class="b" style="left:55px;top:442px;width:29px;height:29px;background:#fafafa;"></div>
<div class="b" style="left:84px;top:442px;width:29px;height:29px;background:#f9f9f9;"></div>
<div class="b" style="left:113px;top:442px;width:29px;height:29px;background:#fafbfa;"></div>
<div class="b" style="left:142px;top:442px;width:29px;height:29px;background:#f8f8f8;"></div>
<div class="b" style="left:171px;top:442px;width:29px;height:29px;background:#fafbfa;"></div>
<div class="b" style="left:374px;top:442px;width:29px;height:29px;background:#fcfdfd;"></div>
<div class="b" style="left:403px;top:442px;width:29px;height:29px;background:#f7f7f7;"></div>
<div class="b" style="left:432px;top:442px;width:29px;height:29px;background:#f9f9f9;"></div>
<div class="b" style="left:461px;top:442px;width:29px;height:29px;background:#fafafa;"></div>
<div class="b" style="left:490px;top:442px;width:29px;height:29px;background:#fafafa;"></div>
<div class="b" style="left:519px;top:442px;width:29px;height:29px;background:#fafafa;"></div>
<div class="b" style="left:26px;top:500px;width:29px;height:29px;background:#cdd1d3;"></div>
<div class="b" style="left:55px;top:500px;width:29px;height:29px;background:#c9cdcf;"></div>
<div class="b" style="left:84px;top:500px;width:29px;height:29px;background:#d2d5d7;"></div>
<div class="b" style="left:113px;top:500px;width:29px;height:29px;background:#c8ccce;"></div>
<div class="b" style="left:142px;top:500px;width:29px;height:29px;background:#ced1d3;"></div>
<div class="b" style="left:171px;top:500px;width:29px;height:29px;background:#e9eaec;"></div>
<div class="b" style="left:374px;top:500px;width:29px;height:29px;background:#ebeced;"></div>
<div class="b" style="left:403px;top:500px;width:29px;height:29px;background:#c9ccce;"></div>
<div class="b" style="left:432px;top:500px;width:29px;height:29px;background:#dfe1e1;"></div>
<div class="b" style="left:461px;top:500px;width:29px;height:29px;background:#cbcfd1;"></div>
<div class="b" style="left:490px;top:500px;width:29px;height:29px;background:#c9cdcf;"></div>
<div class="b" style="left:519px;top:500px;width:29px;height:29px;background:#d1d5d6;"></div>
<div class="b" style="left:26px;top:558px;width:29px;height:29px;background:#dcdee0;"></div>
<div class="b" style="left:55px;top:558px;width:29px;height:29px;background:#d5d7d9;"></div>
<div class="b" style="left:84px;top:558px;width:29px;height:29px;background:#d5d7d9;"></div>
<div class="b" style="left:113px;top:558px;width:29px;height:29px;background:#e6e8e8;"></div>
<div class="b" style="left:142px;top:558px;width:29px;height:29px;background:#d9ddde;"></div>
<div class="b" style="left:171px;top:558px;width:29px;height:29px;background:#cfd3d5;"></div>
<div class="b" style="left:200px;top:558px;width:29px;height:29px;background:#d1d5d6;"></div>
<div class="b" style="left:229px;top:558px;width:29px;height:29px;background:#d4d8d9;"></div>
<div class="b" style="left:258px;top:558px;width:29px;height:29px;background:#f5f5f5;"></div>
<div class="b" style="left:374px;top:558px;width:29px;height:29px;background:#eceeee;"></div>
<div class="b" style="left:403px;top:558px;width:29px;height:29px;background:#cfd3d5;"></div>
<div class="b" style="left:432px;top:558px;width:29px;height:29px;background:#d6d8da;"></div>
<div class="b" style="left:461px;top:558px;width:29px;height:29px;background:#d9dddf;"></div>
</div>
<div class="b" style="left:455px;top:1346px;width:1970px;height:200px;background:rgba(0,0,0,.2);filter:blur(29px);z-index:8;"></div>
<div class="b" style="left:525px;top:1300px;width:619px;height:48px;overflow:hidden;z-index:9;">
<div class="b" style="left:0px;top:0px;width:619px;height:29px;background:#f4f4f4;"></div>
<div class="b" style="left:0px;top:29px;width:619px;height:29px;background:#e6e6e6;"></div>
<div class="b" style="left:0px;top:29px;width:26px;height:29px;background:#e9e9e9;"></div>
<div class="b" style="left:26px;top:29px;width:29px;height:29px;background:#c9cbcc;"></div>
<div class="b" style="left:55px;top:29px;width:29px;height:29px;background:#c6c8ca;"></div>
<div class="b" style="left:84px;top:29px;width:29px;height:29px;background:#cacccc;"></div>
<div class="b" style="left:113px;top:29px;width:29px;height:29px;background:#c3c6c6;"></div>
<div class="b" style="left:142px;top:29px;width:29px;height:29px;background:#c7c9cb;"></div>
<div class="b" style="left:171px;top:29px;width:29px;height:29px;background:#d9dbdb;"></div>
<div class="b" style="left:374px;top:29px;width:29px;height:29px;background:#d9d9d9;"></div>
<div class="b" style="left:403px;top:29px;width:29px;height:29px;background:#c3c5c5;"></div>
<div class="b" style="left:432px;top:29px;width:29px;height:29px;background:#cdcfd1;"></div>
<div class="b" style="left:461px;top:29px;width:29px;height:29px;background:#c5c7c8;"></div>
<div class="b" style="left:490px;top:29px;width:29px;height:29px;background:#c3c5c7;"></div>
<div class="b" style="left:519px;top:29px;width:29px;height:29px;background:#cacbcd;"></div>
</div>
<svg class="b" style="left:0px;top:1334px;z-index:9;" width="24" height="24" viewBox="0 0 24 24" ><path fill="#050d16" d="M0 0 A24 24 0 0 0 24 24 L0 24Z"/></svg>
<svg class="b" style="left:2856px;top:1334px;z-index:9;" width="24" height="24" viewBox="0 0 24 24" ><path fill="#6a2213" stroke="#140503" stroke-width="1.2" d="M24 0 A24 24 0 0 1 0 24 L24 24Z"/></svg>
<div class="b" style="left:0px;top:0px;width:2px;height:1334px;background:rgba(255,255,255,.2);z-index:10;"></div>
<div class="b" style="left:2878px;top:0px;width:2px;height:1334px;background:rgba(255,255,255,.22);z-index:10;"></div>
</div></body></html>
